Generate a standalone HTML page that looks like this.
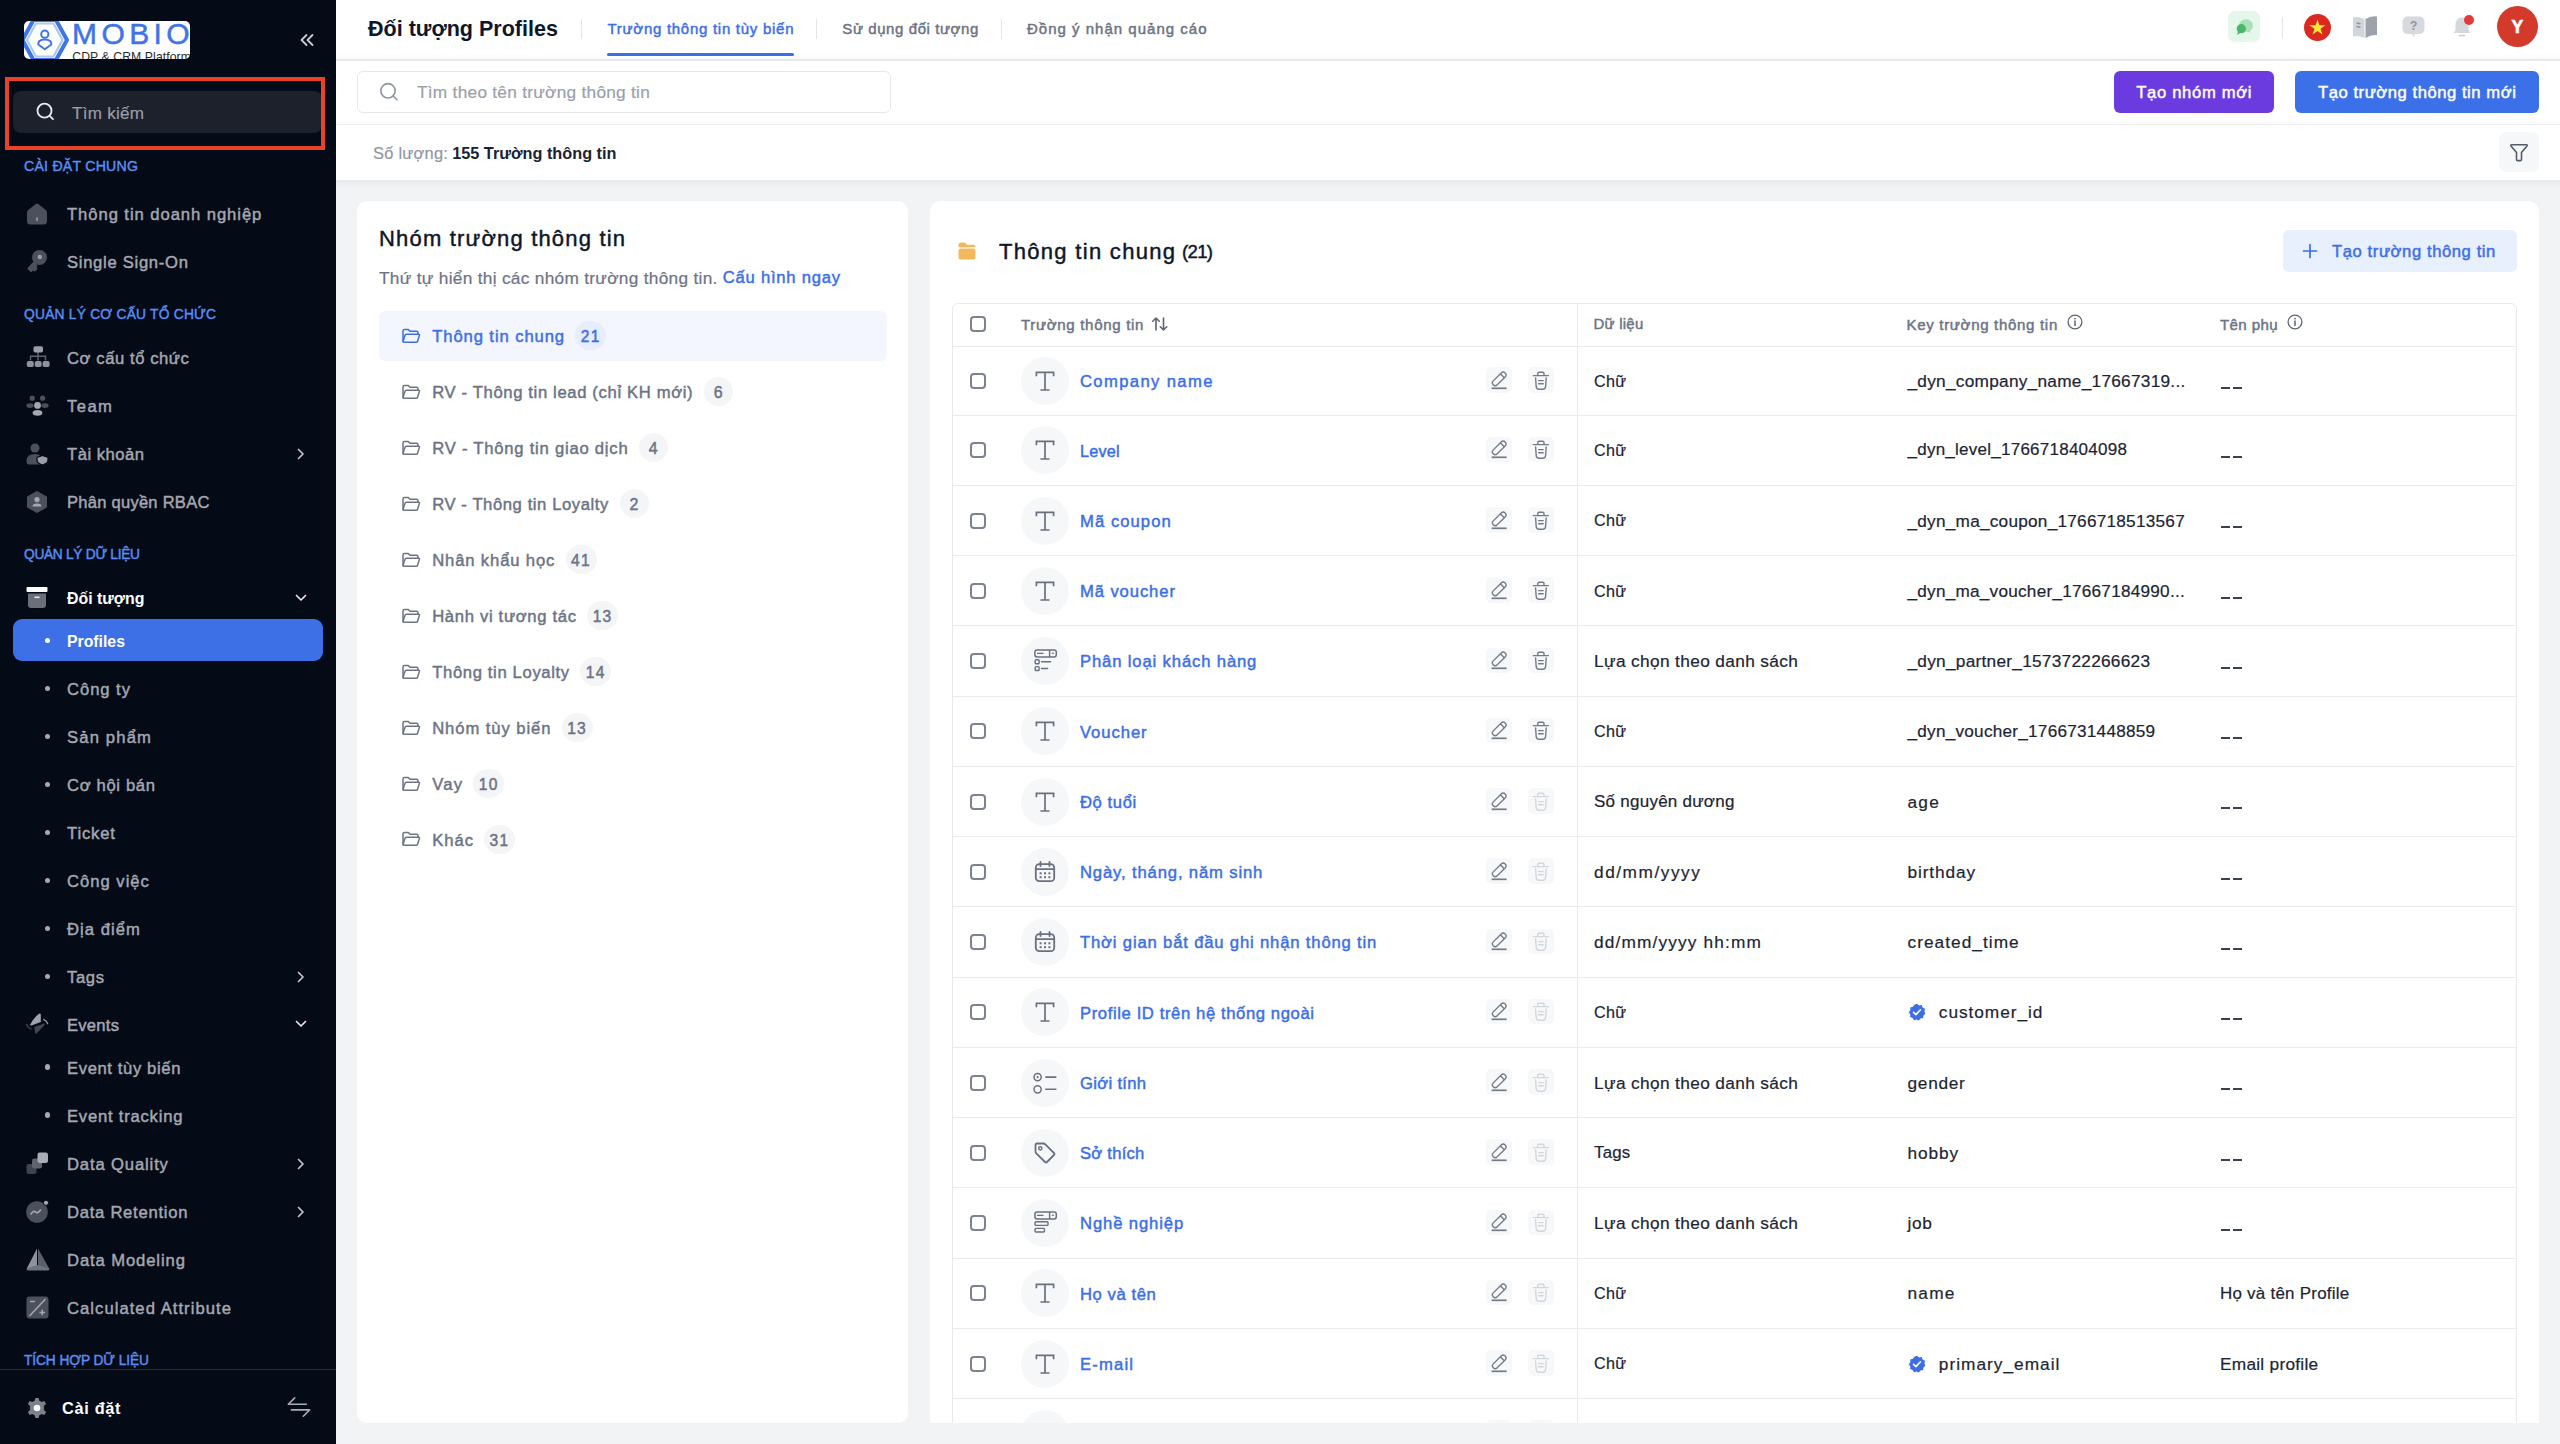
<!DOCTYPE html><html><head><meta charset="utf-8"><style>html,body{margin:0;padding:0;width:2560px;height:1444px;overflow:hidden;background:#f2f3f5;font-family:'Liberation Sans',sans-serif;position:relative}</style></head><body><div style="position:absolute;left:0;top:0;width:336px;height:1444px;background:#040a16"></div><div id="logo" style="position:absolute;left:24px;top:21px;width:166px;height:38px;background:#fff;border-radius:5px;overflow:hidden"><svg width="166" height="38" viewBox="0 0 166 38" style="position:absolute;left:0;top:0"><polygon points="-1.5,19 9.5,-1 32,-1 43,19 32,39 9.5,39" fill="none" stroke="#3f74e8" stroke-width="4"/><polygon points="3,19 12,2.5 29.5,2.5 38.5,19 29.5,35.5 12,35.5" fill="none" stroke="#a9c8f7" stroke-width="2.2"/><circle cx="20.8" cy="13.2" r="3.6" fill="none" stroke="#3f74e8" stroke-width="2"/><path d="M20.8,18.5 C15.5,18.5 14,21 14.3,23.5 L20.8,28.2 L27.3,23.5 C27.6,21 26.1,18.5 20.8,18.5 Z" fill="none" stroke="#3f74e8" stroke-width="2" stroke-linejoin="round"/></svg><div style="position:absolute;left:48px;top:-4.5px;font:400 30px/34px 'Liberation Sans',sans-serif;color:#3f74e8;letter-spacing:4.4px;white-space:nowrap;-webkit-text-stroke:0.5px #3f74e8">MOBIO</div><div style="position:absolute;left:48.3px;top:28.5px;font:400 12.2px/14px 'Liberation Sans',sans-serif;color:#2b2b2b;letter-spacing:0.1px;white-space:nowrap">CDP &amp; CRM Platform</div></div><svg style="position:absolute;left:299px;top:33px" width="16" height="14" viewBox="0 0 16 14"><path d="M7.5,2 L2.5,7 L7.5,12 M13.5,2 L8.5,7 L13.5,12" fill="none" stroke="#c9ccd3" stroke-width="1.8" stroke-linecap="round" stroke-linejoin="round"/></svg><div style="position:absolute;left:13px;top:91px;width:309px;height:42px;background:#1c212b;border-radius:8px"></div><svg style="position:absolute;left:35px;top:101px" width="21" height="21" viewBox="0 0 21 21"><circle cx="9.5" cy="9.7" r="7" fill="none" stroke="#e9eaee" stroke-width="1.8"/><path d="M14.6,14.8 L18,18.2" stroke="#e9eaee" stroke-width="1.8" stroke-linecap="round"/></svg><div style="position:absolute;left:5px;top:77px;width:312px;height:65px;border:4.6px solid #e8432a"></div><div style="position:absolute;left:13px;top:619px;width:310px;height:42px;background:#3d6fe6;border-radius:9px"></div><div style="position:absolute;left:44.8px;top:637.5px;width:5.5px;height:5.5px;border-radius:50%;background:#ffffff"></div><div style="position:absolute;left:44.8px;top:685.5px;width:5.5px;height:5.5px;border-radius:50%;background:#a4a8b1"></div><div style="position:absolute;left:44.8px;top:733.5px;width:5.5px;height:5.5px;border-radius:50%;background:#a4a8b1"></div><div style="position:absolute;left:44.8px;top:781.5px;width:5.5px;height:5.5px;border-radius:50%;background:#a4a8b1"></div><div style="position:absolute;left:44.8px;top:829.5px;width:5.5px;height:5.5px;border-radius:50%;background:#a4a8b1"></div><div style="position:absolute;left:44.8px;top:877.5px;width:5.5px;height:5.5px;border-radius:50%;background:#a4a8b1"></div><div style="position:absolute;left:44.8px;top:925.5px;width:5.5px;height:5.5px;border-radius:50%;background:#a4a8b1"></div><div style="position:absolute;left:44.8px;top:973.6px;width:5.5px;height:5.5px;border-radius:50%;background:#a4a8b1"></div><div style="position:absolute;left:44.8px;top:1064.4px;width:5.5px;height:5.5px;border-radius:50%;background:#a4a8b1"></div><div style="position:absolute;left:44.8px;top:1112.3px;width:5.5px;height:5.5px;border-radius:50%;background:#a4a8b1"></div><svg style="position:absolute;left:294px;top:446.5px" width="14" height="14" viewBox="0 0 14 14"><path d="M4.5,2.5 L9,7 L4.5,11.5" fill="none" stroke="#c2c5cc" stroke-width="1.7" stroke-linecap="round" stroke-linejoin="round"/></svg><svg style="position:absolute;left:294px;top:590.5px" width="14" height="14" viewBox="0 0 14 14"><path d="M2.5,4.5 L7,9 L11.5,4.5" fill="none" stroke="#e6e7ea" stroke-width="1.7" stroke-linecap="round" stroke-linejoin="round"/></svg><svg style="position:absolute;left:294px;top:969.6px" width="14" height="14" viewBox="0 0 14 14"><path d="M4.5,2.5 L9,7 L4.5,11.5" fill="none" stroke="#c2c5cc" stroke-width="1.7" stroke-linecap="round" stroke-linejoin="round"/></svg><svg style="position:absolute;left:294px;top:1017.3px" width="14" height="14" viewBox="0 0 14 14"><path d="M2.5,4.5 L7,9 L11.5,4.5" fill="none" stroke="#e6e7ea" stroke-width="1.7" stroke-linecap="round" stroke-linejoin="round"/></svg><svg style="position:absolute;left:294px;top:1156.5px" width="14" height="14" viewBox="0 0 14 14"><path d="M4.5,2.5 L9,7 L4.5,11.5" fill="none" stroke="#c2c5cc" stroke-width="1.7" stroke-linecap="round" stroke-linejoin="round"/></svg><svg style="position:absolute;left:294px;top:1204.6px" width="14" height="14" viewBox="0 0 14 14"><path d="M4.5,2.5 L9,7 L4.5,11.5" fill="none" stroke="#c2c5cc" stroke-width="1.7" stroke-linecap="round" stroke-linejoin="round"/></svg><div style="position:absolute;left:0;top:1369px;width:336px;height:75px;background:#040a16;border-top:1px solid #262b36"></div><svg style="position:absolute;left:287px;top:1396px" width="25" height="23" viewBox="0 0 25 23"><path d="M1.3,8.2 L19.4,8.2 M1.3,8.2 L7.7,1.9 M22.6,13.9 L4.4,13.9 M22.6,13.9 L16.3,20.2" fill="none" stroke="#a9adb6" stroke-width="1.6" stroke-linecap="round"/></svg><div style="position:absolute;left:336px;top:0;width:2224px;height:1444px;background:#f2f3f5"></div><div style="position:absolute;left:336px;top:0;width:2224px;height:180px;background:#ffffff"></div><div style="position:absolute;left:336px;top:53px;width:2224px;height:6px;background:linear-gradient(to bottom, rgba(0,0,0,0), rgba(0,0,0,0.025))"></div><div style="position:absolute;left:336px;top:59px;width:2224px;height:1.5px;background:#e6e7ea"></div><div style="position:absolute;left:336px;top:119px;width:2224px;height:4.5px;background:linear-gradient(to bottom, rgba(0,0,0,0), rgba(0,0,0,0.015))"></div><div style="position:absolute;left:336px;top:123.5px;width:2224px;height:1.5px;background:#eceef0"></div><div style="position:absolute;left:336px;top:180px;width:2224px;height:8px;background:linear-gradient(to bottom, #e8e9ec, #f2f3f5)"></div><div style="position:absolute;left:580.5px;top:19px;width:1px;height:20px;background:#e3e5e8"></div><div style="position:absolute;left:607px;top:53px;width:187px;height:3px;background:#3b6ee8;border-radius:2px"></div><div style="position:absolute;left:815.5px;top:19px;width:1px;height:20px;background:#e3e5e8"></div><div style="position:absolute;left:1000.5px;top:19px;width:1px;height:20px;background:#e3e5e8"></div><div style="position:absolute;left:2228px;top:11px;width:32px;height:31px;background:#e5f6ea;border-radius:7px"></div><svg style="position:absolute;left:2232px;top:15px" width="24" height="24" viewBox="0 0 24 24"><ellipse cx="14" cy="10.5" rx="7" ry="6.3" fill="#a9dfb9"/><path d="M17,15 L19,18 L14.5,16" fill="#a9dfb9"/><circle cx="9.3" cy="13.7" r="4.6" fill="#47b968"/><path d="M6,16.5 L5,20 L9,17.5" fill="#47b968"/></svg><div style="position:absolute;left:2282px;top:16.5px;width:1px;height:21px;background:#e3e5e8"></div><svg style="position:absolute;left:2304px;top:13.5px" width="27" height="27" viewBox="0 0 27 27"><circle cx="13.5" cy="13.5" r="13.5" fill="#da2a1f"/><polygon points="13.5,5.5 15.4,11.2 21.4,11.2 16.5,14.8 18.4,20.5 13.5,17 8.6,20.5 10.5,14.8 5.6,11.2 11.6,11.2" fill="#fde93a"/></svg><svg style="position:absolute;left:2352px;top:15px" width="26" height="24" viewBox="0 0 26 24"><path d="M1,2.5 Q6,1 12.5,4 L12.5,23 Q6,20 1,21.5 Z" fill="#d2d5db"/><path d="M13.5,4 Q19,0.5 25,1.5 L25,20 Q19,19.5 13.5,23 Z" fill="#9da2ab"/><path d="M4.5,8 L8.5,8.8 M4.5,11.5 L8.5,12.3" stroke="#8f949d" stroke-width="1.5"/></svg><svg style="position:absolute;left:2402px;top:16px" width="23" height="22" viewBox="0 0 23 22"><rect x="0.5" y="0.5" width="22" height="17.5" rx="5" fill="#d7d9de"/><path d="M9.5,17 L11.5,21 L13.5,17 Z" fill="#d7d9de"/><text x="11.5" y="14" font-family="Liberation Sans" font-weight="700" font-size="12.5" fill="#9095a0" text-anchor="middle">?</text></svg><svg style="position:absolute;left:2451px;top:13px" width="26" height="26" viewBox="0 0 26 26"><path d="M11,4.5 C6.5,4.5 4.5,8 4.5,12 L4.5,17 L2.5,20 L19.5,20 L17.5,17 L17.5,12 C17.5,8 15.5,4.5 11,4.5 Z" fill="#d5d8dd"/><path d="M8.5,22.5 L13.5,22.5" stroke="#c8cbd1" stroke-width="1.6" stroke-linecap="round"/><circle cx="18" cy="7" r="5" fill="#e5383b"/></svg><div style="position:absolute;left:2497px;top:6px;width:41px;height:41px;background:#d33a2c;border-radius:50%"></div><div style="position:absolute;left:357px;top:70.5px;width:532px;height:40px;border:1px solid #e6e8eb;border-radius:6px;background:#fff"></div><svg style="position:absolute;left:378px;top:81px" width="22" height="22" viewBox="0 0 22 22"><circle cx="10" cy="9.8" r="7.2" fill="none" stroke="#8e94a0" stroke-width="1.6"/><path d="M15.2,15 L19,18.8" stroke="#8e94a0" stroke-width="1.6" stroke-linecap="round"/></svg><div style="position:absolute;left:2114px;top:71px;width:160px;height:42px;background:#6c3bdf;border-radius:6px"></div><div style="position:absolute;left:2295px;top:71px;width:244px;height:42px;background:#3c70e9;border-radius:6px"></div><div style="position:absolute;left:2499px;top:132px;width:40px;height:40px;background:#f6f7f9;border-radius:7px"></div><svg style="position:absolute;left:2508px;top:141px" width="22" height="22" viewBox="0 0 22 22"><path d="M3.5,3.8 L18.5,3.8 Q19.6,3.8 19,4.9 L13.5,11.5 L13.5,18.2 Q13.5,19.6 12.2,19.6 L9.8,19.6 Q8.5,19.6 8.5,18.2 L8.5,11.5 L3,4.9 Q2.4,3.8 3.5,3.8 Z" fill="none" stroke="#555c69" stroke-width="1.6" stroke-linejoin="round"/></svg><div style="position:absolute;left:357px;top:201px;width:551px;height:1222px;background:#fff;border-radius:10px"></div><div style="position:absolute;left:379px;top:311px;width:508px;height:49.5px;background:#f3f6fe;border-radius:6px"></div><svg style="position:absolute;left:400.5px;top:325.5px" width="20" height="20" viewBox="0 0 20 20"><path d="M2,15.5 L2,5 Q2,3.5 3.5,3.5 L7.3,3.5 L9,5.3 L15.5,5.3 Q17,5.3 17,6.8 L17,8.2" fill="none" stroke="#3b6ee8" stroke-width="1.5" stroke-linejoin="round"/><path d="M2,15.5 L4,9.2 Q4.3,8.2 5.4,8.2 L17.5,8.2 Q18.8,8.2 18.4,9.4 L16.6,15.3 Q16.3,16.3 15.2,16.3 L3,16.3 Q2,16.3 2,15.5 Z" fill="none" stroke="#3b6ee8" stroke-width="1.5" stroke-linejoin="round"/></svg><div style="position:absolute;left:575.2px;top:321.0px;width:31px;height:29px;border-radius:15px;background:#e6edfc"></div><svg style="position:absolute;left:400.5px;top:381.6px" width="20" height="20" viewBox="0 0 20 20"><path d="M2,15.5 L2,5 Q2,3.5 3.5,3.5 L7.3,3.5 L9,5.3 L15.5,5.3 Q17,5.3 17,6.8 L17,8.2" fill="none" stroke="#6b7385" stroke-width="1.5" stroke-linejoin="round"/><path d="M2,15.5 L4,9.2 Q4.3,8.2 5.4,8.2 L17.5,8.2 Q18.8,8.2 18.4,9.4 L16.6,15.3 Q16.3,16.3 15.2,16.3 L3,16.3 Q2,16.3 2,15.5 Z" fill="none" stroke="#6b7385" stroke-width="1.5" stroke-linejoin="round"/></svg><div style="position:absolute;left:703.8px;top:377.1px;width:29px;height:29px;border-radius:15px;background:#f4f5f7"></div><svg style="position:absolute;left:400.5px;top:437.6px" width="20" height="20" viewBox="0 0 20 20"><path d="M2,15.5 L2,5 Q2,3.5 3.5,3.5 L7.3,3.5 L9,5.3 L15.5,5.3 Q17,5.3 17,6.8 L17,8.2" fill="none" stroke="#6b7385" stroke-width="1.5" stroke-linejoin="round"/><path d="M2,15.5 L4,9.2 Q4.3,8.2 5.4,8.2 L17.5,8.2 Q18.8,8.2 18.4,9.4 L16.6,15.3 Q16.3,16.3 15.2,16.3 L3,16.3 Q2,16.3 2,15.5 Z" fill="none" stroke="#6b7385" stroke-width="1.5" stroke-linejoin="round"/></svg><div style="position:absolute;left:638.8px;top:433.1px;width:29px;height:29px;border-radius:15px;background:#f4f5f7"></div><svg style="position:absolute;left:400.5px;top:493.6px" width="20" height="20" viewBox="0 0 20 20"><path d="M2,15.5 L2,5 Q2,3.5 3.5,3.5 L7.3,3.5 L9,5.3 L15.5,5.3 Q17,5.3 17,6.8 L17,8.2" fill="none" stroke="#6b7385" stroke-width="1.5" stroke-linejoin="round"/><path d="M2,15.5 L4,9.2 Q4.3,8.2 5.4,8.2 L17.5,8.2 Q18.8,8.2 18.4,9.4 L16.6,15.3 Q16.3,16.3 15.2,16.3 L3,16.3 Q2,16.3 2,15.5 Z" fill="none" stroke="#6b7385" stroke-width="1.5" stroke-linejoin="round"/></svg><div style="position:absolute;left:619.5px;top:489.1px;width:29px;height:29px;border-radius:15px;background:#f4f5f7"></div><svg style="position:absolute;left:400.5px;top:549.7px" width="20" height="20" viewBox="0 0 20 20"><path d="M2,15.5 L2,5 Q2,3.5 3.5,3.5 L7.3,3.5 L9,5.3 L15.5,5.3 Q17,5.3 17,6.8 L17,8.2" fill="none" stroke="#6b7385" stroke-width="1.5" stroke-linejoin="round"/><path d="M2,15.5 L4,9.2 Q4.3,8.2 5.4,8.2 L17.5,8.2 Q18.8,8.2 18.4,9.4 L16.6,15.3 Q16.3,16.3 15.2,16.3 L3,16.3 Q2,16.3 2,15.5 Z" fill="none" stroke="#6b7385" stroke-width="1.5" stroke-linejoin="round"/></svg><div style="position:absolute;left:565.5px;top:545.2px;width:31px;height:29px;border-radius:15px;background:#f4f5f7"></div><svg style="position:absolute;left:400.5px;top:605.9px" width="20" height="20" viewBox="0 0 20 20"><path d="M2,15.5 L2,5 Q2,3.5 3.5,3.5 L7.3,3.5 L9,5.3 L15.5,5.3 Q17,5.3 17,6.8 L17,8.2" fill="none" stroke="#6b7385" stroke-width="1.5" stroke-linejoin="round"/><path d="M2,15.5 L4,9.2 Q4.3,8.2 5.4,8.2 L17.5,8.2 Q18.8,8.2 18.4,9.4 L16.6,15.3 Q16.3,16.3 15.2,16.3 L3,16.3 Q2,16.3 2,15.5 Z" fill="none" stroke="#6b7385" stroke-width="1.5" stroke-linejoin="round"/></svg><div style="position:absolute;left:587.1px;top:601.4px;width:31px;height:29px;border-radius:15px;background:#f4f5f7"></div><svg style="position:absolute;left:400.5px;top:661.5px" width="20" height="20" viewBox="0 0 20 20"><path d="M2,15.5 L2,5 Q2,3.5 3.5,3.5 L7.3,3.5 L9,5.3 L15.5,5.3 Q17,5.3 17,6.8 L17,8.2" fill="none" stroke="#6b7385" stroke-width="1.5" stroke-linejoin="round"/><path d="M2,15.5 L4,9.2 Q4.3,8.2 5.4,8.2 L17.5,8.2 Q18.8,8.2 18.4,9.4 L16.6,15.3 Q16.3,16.3 15.2,16.3 L3,16.3 Q2,16.3 2,15.5 Z" fill="none" stroke="#6b7385" stroke-width="1.5" stroke-linejoin="round"/></svg><div style="position:absolute;left:580.3px;top:657.0px;width:31px;height:29px;border-radius:15px;background:#f4f5f7"></div><svg style="position:absolute;left:400.5px;top:717.5px" width="20" height="20" viewBox="0 0 20 20"><path d="M2,15.5 L2,5 Q2,3.5 3.5,3.5 L7.3,3.5 L9,5.3 L15.5,5.3 Q17,5.3 17,6.8 L17,8.2" fill="none" stroke="#6b7385" stroke-width="1.5" stroke-linejoin="round"/><path d="M2,15.5 L4,9.2 Q4.3,8.2 5.4,8.2 L17.5,8.2 Q18.8,8.2 18.4,9.4 L16.6,15.3 Q16.3,16.3 15.2,16.3 L3,16.3 Q2,16.3 2,15.5 Z" fill="none" stroke="#6b7385" stroke-width="1.5" stroke-linejoin="round"/></svg><div style="position:absolute;left:561.6px;top:713.0px;width:31px;height:29px;border-radius:15px;background:#f4f5f7"></div><svg style="position:absolute;left:400.5px;top:773.8px" width="20" height="20" viewBox="0 0 20 20"><path d="M2,15.5 L2,5 Q2,3.5 3.5,3.5 L7.3,3.5 L9,5.3 L15.5,5.3 Q17,5.3 17,6.8 L17,8.2" fill="none" stroke="#6b7385" stroke-width="1.5" stroke-linejoin="round"/><path d="M2,15.5 L4,9.2 Q4.3,8.2 5.4,8.2 L17.5,8.2 Q18.8,8.2 18.4,9.4 L16.6,15.3 Q16.3,16.3 15.2,16.3 L3,16.3 Q2,16.3 2,15.5 Z" fill="none" stroke="#6b7385" stroke-width="1.5" stroke-linejoin="round"/></svg><div style="position:absolute;left:473.2px;top:769.3px;width:31px;height:29px;border-radius:15px;background:#f4f5f7"></div><svg style="position:absolute;left:400.5px;top:829.4px" width="20" height="20" viewBox="0 0 20 20"><path d="M2,15.5 L2,5 Q2,3.5 3.5,3.5 L7.3,3.5 L9,5.3 L15.5,5.3 Q17,5.3 17,6.8 L17,8.2" fill="none" stroke="#6b7385" stroke-width="1.5" stroke-linejoin="round"/><path d="M2,15.5 L4,9.2 Q4.3,8.2 5.4,8.2 L17.5,8.2 Q18.8,8.2 18.4,9.4 L16.6,15.3 Q16.3,16.3 15.2,16.3 L3,16.3 Q2,16.3 2,15.5 Z" fill="none" stroke="#6b7385" stroke-width="1.5" stroke-linejoin="round"/></svg><div style="position:absolute;left:484.0px;top:824.9px;width:31px;height:29px;border-radius:15px;background:#f4f5f7"></div><div style="position:absolute;left:930px;top:201px;width:1609px;height:1222px;background:#fff;border-radius:10px 10px 0 0;overflow:hidden"></div><svg style="position:absolute;left:957px;top:241px" width="20" height="20" viewBox="0 0 20 20"><path d="M1.5,4 Q1.5,1.5 4,1.5 L7,1.5 Q8.5,1.5 9.5,3 L10,3.8 L16.5,3.8 Q18.5,3.8 18.5,5.5 L18.5,6.2 L1.5,6.2 Z" fill="#f3b85c"/><rect x="1.5" y="7.6" width="17" height="11" rx="2.6" fill="#f3b85c"/></svg><div style="position:absolute;left:2283px;top:230px;width:234px;height:42px;background:#e8effd;border-radius:6px"></div><svg style="position:absolute;left:2302px;top:243px" width="16" height="16" viewBox="0 0 16 16"><path d="M8,1.5 L8,14.5 M1.5,8 L14.5,8" stroke="#3b6ee8" stroke-width="1.7" stroke-linecap="round"/></svg><div style="position:absolute;left:951.5px;top:302.5px;width:1565.5px;height:1200px;border:1px solid #e7e9ec;border-radius:6px;box-sizing:border-box"></div><div style="position:absolute;left:1577px;top:302.5px;width:1px;height:1200px;background:#e7e9ec"></div><div style="position:absolute;left:970px;top:316.0px;width:16px;height:16px;border:2px solid #7c8290;border-radius:4px;box-sizing:border-box"></div><svg style="position:absolute;left:1151px;top:316px" width="18" height="16" viewBox="0 0 18 16"><path d="M5,14 L5,2 M1.8,5.2 L5,2 L8.2,5.2 M12.5,2 L12.5,14 M9.3,10.8 L12.5,14 L15.7,10.8" fill="none" stroke="#5d6370" stroke-width="1.6" stroke-linecap="round" stroke-linejoin="round"/></svg><svg style="position:absolute;left:2066.5px;top:314.0px" width="16" height="16" viewBox="0 0 16 16"><circle cx="8" cy="8" r="6.9" fill="none" stroke="#5d6370" stroke-width="1.3"/><path d="M8,7 L8,11.5" stroke="#5d6370" stroke-width="1.5" stroke-linecap="round"/><circle cx="8" cy="4.6" r="0.9" fill="#5d6370"/></svg><svg style="position:absolute;left:2286.5px;top:314.0px" width="16" height="16" viewBox="0 0 16 16"><circle cx="8" cy="8" r="6.9" fill="none" stroke="#5d6370" stroke-width="1.3"/><path d="M8,7 L8,11.5" stroke="#5d6370" stroke-width="1.5" stroke-linecap="round"/><circle cx="8" cy="4.6" r="0.9" fill="#5d6370"/></svg><div style="position:absolute;left:952.5px;top:346.00px;width:1563.5px;height:1px;background:#e9ebee"></div><div style="position:absolute;left:952.5px;top:414.60px;width:1563.5px;height:1px;background:#e9ebee"></div><div style="position:absolute;left:970px;top:372.8px;width:16px;height:16px;border:2px solid #7c8290;border-radius:4px;box-sizing:border-box"></div><div style="position:absolute;left:1021px;top:356.8px;width:48px;height:48px;border-radius:50%;background:#f6f7f9"></div><svg style="position:absolute;left:1033px;top:368.8px" width="24" height="24" viewBox="0 0 24 24"><path d="M3.4,6.3 L3.4,3.3 L20.6,3.3 L20.6,6.3 M12,3.3 L12,21 M8.3,21 L15.7,21" fill="none" stroke="#6a7080" stroke-width="1.7" stroke-linecap="square"/></svg><div style="position:absolute;left:1486px;top:367.4px;width:26px;height:25.5px;border-radius:5px;background:#f7f8f9"></div><div style="position:absolute;left:1528px;top:367.4px;width:26px;height:25.5px;border-radius:5px;background:#f7f8f9"></div><svg style="position:absolute;left:1489px;top:370.8px" width="20" height="20" viewBox="0 0 20 20"><g transform="rotate(-45 10.2 7.9)"><rect x="1.8" y="5.1" width="16.8" height="5.6" rx="2.8" fill="none" stroke="#747a88" stroke-width="1.35"/><path d="M14.6,5.1 L14.6,10.7" stroke="#747a88" stroke-width="1.35"/></g><path d="M2.6,17.3 L17.6,17.3" stroke="#747a88" stroke-width="1.7"/></svg><svg style="position:absolute;left:1531px;top:370.8px" width="20" height="20" viewBox="0 0 20 20"><path d="M2.3,4.6 L17.4,4.6 M6.8,4.3 L6.8,2.6 Q6.8,1.2 8.2,1.2 L11.6,1.2 Q13,1.2 13,2.6 L13,4.3 M4.6,7 L5.2,15.5 Q5.4,18.2 8,18.2 L11.8,18.2 Q14.4,18.2 14.6,15.5 L15.2,7 M7.6,9.6 L12.2,9.6 M7.6,12.8 L12.2,12.8" fill="none" stroke="#747a88" stroke-width="1.4" stroke-linecap="round" stroke-linejoin="round"/></svg><div style="position:absolute;left:2221px;top:387px;width:9px;height:2px;background:#3a4252"></div><div style="position:absolute;left:2233px;top:387px;width:9px;height:2px;background:#3a4252"></div><div style="position:absolute;left:952.5px;top:484.85px;width:1563.5px;height:1px;background:#e9ebee"></div><div style="position:absolute;left:970px;top:442.2px;width:16px;height:16px;border:2px solid #7c8290;border-radius:4px;box-sizing:border-box"></div><div style="position:absolute;left:1021px;top:426.2px;width:48px;height:48px;border-radius:50%;background:#f6f7f9"></div><svg style="position:absolute;left:1033px;top:438.2px" width="24" height="24" viewBox="0 0 24 24"><path d="M3.4,6.3 L3.4,3.3 L20.6,3.3 L20.6,6.3 M12,3.3 L12,21 M8.3,21 L15.7,21" fill="none" stroke="#6a7080" stroke-width="1.7" stroke-linecap="square"/></svg><div style="position:absolute;left:1486px;top:436.8px;width:26px;height:25.5px;border-radius:5px;background:#f7f8f9"></div><div style="position:absolute;left:1528px;top:436.8px;width:26px;height:25.5px;border-radius:5px;background:#f7f8f9"></div><svg style="position:absolute;left:1489px;top:440.2px" width="20" height="20" viewBox="0 0 20 20"><g transform="rotate(-45 10.2 7.9)"><rect x="1.8" y="5.1" width="16.8" height="5.6" rx="2.8" fill="none" stroke="#747a88" stroke-width="1.35"/><path d="M14.6,5.1 L14.6,10.7" stroke="#747a88" stroke-width="1.35"/></g><path d="M2.6,17.3 L17.6,17.3" stroke="#747a88" stroke-width="1.7"/></svg><svg style="position:absolute;left:1531px;top:440.2px" width="20" height="20" viewBox="0 0 20 20"><path d="M2.3,4.6 L17.4,4.6 M6.8,4.3 L6.8,2.6 Q6.8,1.2 8.2,1.2 L11.6,1.2 Q13,1.2 13,2.6 L13,4.3 M4.6,7 L5.2,15.5 Q5.4,18.2 8,18.2 L11.8,18.2 Q14.4,18.2 14.6,15.5 L15.2,7 M7.6,9.6 L12.2,9.6 M7.6,12.8 L12.2,12.8" fill="none" stroke="#747a88" stroke-width="1.4" stroke-linecap="round" stroke-linejoin="round"/></svg><div style="position:absolute;left:2221px;top:456px;width:9px;height:2px;background:#3a4252"></div><div style="position:absolute;left:2233px;top:456px;width:9px;height:2px;background:#3a4252"></div><div style="position:absolute;left:952.5px;top:555.10px;width:1563.5px;height:1px;background:#e9ebee"></div><div style="position:absolute;left:970px;top:512.5px;width:16px;height:16px;border:2px solid #7c8290;border-radius:4px;box-sizing:border-box"></div><div style="position:absolute;left:1021px;top:496.5px;width:48px;height:48px;border-radius:50%;background:#f6f7f9"></div><svg style="position:absolute;left:1033px;top:508.5px" width="24" height="24" viewBox="0 0 24 24"><path d="M3.4,6.3 L3.4,3.3 L20.6,3.3 L20.6,6.3 M12,3.3 L12,21 M8.3,21 L15.7,21" fill="none" stroke="#6a7080" stroke-width="1.7" stroke-linecap="square"/></svg><div style="position:absolute;left:1486px;top:507.1px;width:26px;height:25.5px;border-radius:5px;background:#f7f8f9"></div><div style="position:absolute;left:1528px;top:507.1px;width:26px;height:25.5px;border-radius:5px;background:#f7f8f9"></div><svg style="position:absolute;left:1489px;top:510.5px" width="20" height="20" viewBox="0 0 20 20"><g transform="rotate(-45 10.2 7.9)"><rect x="1.8" y="5.1" width="16.8" height="5.6" rx="2.8" fill="none" stroke="#747a88" stroke-width="1.35"/><path d="M14.6,5.1 L14.6,10.7" stroke="#747a88" stroke-width="1.35"/></g><path d="M2.6,17.3 L17.6,17.3" stroke="#747a88" stroke-width="1.7"/></svg><svg style="position:absolute;left:1531px;top:510.5px" width="20" height="20" viewBox="0 0 20 20"><path d="M2.3,4.6 L17.4,4.6 M6.8,4.3 L6.8,2.6 Q6.8,1.2 8.2,1.2 L11.6,1.2 Q13,1.2 13,2.6 L13,4.3 M4.6,7 L5.2,15.5 Q5.4,18.2 8,18.2 L11.8,18.2 Q14.4,18.2 14.6,15.5 L15.2,7 M7.6,9.6 L12.2,9.6 M7.6,12.8 L12.2,12.8" fill="none" stroke="#747a88" stroke-width="1.4" stroke-linecap="round" stroke-linejoin="round"/></svg><div style="position:absolute;left:2221px;top:526px;width:9px;height:2px;background:#3a4252"></div><div style="position:absolute;left:2233px;top:526px;width:9px;height:2px;background:#3a4252"></div><div style="position:absolute;left:952.5px;top:625.35px;width:1563.5px;height:1px;background:#e9ebee"></div><div style="position:absolute;left:970px;top:582.7px;width:16px;height:16px;border:2px solid #7c8290;border-radius:4px;box-sizing:border-box"></div><div style="position:absolute;left:1021px;top:566.7px;width:48px;height:48px;border-radius:50%;background:#f6f7f9"></div><svg style="position:absolute;left:1033px;top:578.7px" width="24" height="24" viewBox="0 0 24 24"><path d="M3.4,6.3 L3.4,3.3 L20.6,3.3 L20.6,6.3 M12,3.3 L12,21 M8.3,21 L15.7,21" fill="none" stroke="#6a7080" stroke-width="1.7" stroke-linecap="square"/></svg><div style="position:absolute;left:1486px;top:577.3px;width:26px;height:25.5px;border-radius:5px;background:#f7f8f9"></div><div style="position:absolute;left:1528px;top:577.3px;width:26px;height:25.5px;border-radius:5px;background:#f7f8f9"></div><svg style="position:absolute;left:1489px;top:580.7px" width="20" height="20" viewBox="0 0 20 20"><g transform="rotate(-45 10.2 7.9)"><rect x="1.8" y="5.1" width="16.8" height="5.6" rx="2.8" fill="none" stroke="#747a88" stroke-width="1.35"/><path d="M14.6,5.1 L14.6,10.7" stroke="#747a88" stroke-width="1.35"/></g><path d="M2.6,17.3 L17.6,17.3" stroke="#747a88" stroke-width="1.7"/></svg><svg style="position:absolute;left:1531px;top:580.7px" width="20" height="20" viewBox="0 0 20 20"><path d="M2.3,4.6 L17.4,4.6 M6.8,4.3 L6.8,2.6 Q6.8,1.2 8.2,1.2 L11.6,1.2 Q13,1.2 13,2.6 L13,4.3 M4.6,7 L5.2,15.5 Q5.4,18.2 8,18.2 L11.8,18.2 Q14.4,18.2 14.6,15.5 L15.2,7 M7.6,9.6 L12.2,9.6 M7.6,12.8 L12.2,12.8" fill="none" stroke="#747a88" stroke-width="1.4" stroke-linecap="round" stroke-linejoin="round"/></svg><div style="position:absolute;left:2221px;top:597px;width:9px;height:2px;background:#3a4252"></div><div style="position:absolute;left:2233px;top:597px;width:9px;height:2px;background:#3a4252"></div><div style="position:absolute;left:952.5px;top:695.60px;width:1563.5px;height:1px;background:#e9ebee"></div><div style="position:absolute;left:970px;top:653.0px;width:16px;height:16px;border:2px solid #7c8290;border-radius:4px;box-sizing:border-box"></div><div style="position:absolute;left:1021px;top:637.0px;width:48px;height:48px;border-radius:50%;background:#f6f7f9"></div><svg style="position:absolute;left:1033.5px;top:649.0px" width="24" height="24" viewBox="0 0 24 24"><rect x="0.9" y="0.9" width="21.4" height="7" rx="2.2" fill="none" stroke="#6a7080" stroke-width="1.5"/><path d="M3,4.4 L9.5,4.4 M15.6,0.9 L15.6,7.9" stroke="#6a7080" stroke-width="1.4"/><path d="M17.8,5 L18.9,3.6 L20,5" fill="none" stroke="#6a7080" stroke-width="1"/><rect x="1.2" y="10.8" width="3.9" height="3.9" rx="0.8" fill="none" stroke="#6a7080" stroke-width="1.4"/><path d="M7.6,12.7 L16.6,12.7" stroke="#6a7080" stroke-width="1.5" stroke-linecap="round"/><rect x="1.2" y="17.6" width="3.9" height="3.9" rx="0.8" fill="none" stroke="#6a7080" stroke-width="1.4"/><path d="M7.6,19.6 L13.6,19.6" stroke="#6a7080" stroke-width="1.5" stroke-linecap="round"/></svg><div style="position:absolute;left:1486px;top:647.6px;width:26px;height:25.5px;border-radius:5px;background:#f7f8f9"></div><div style="position:absolute;left:1528px;top:647.6px;width:26px;height:25.5px;border-radius:5px;background:#f7f8f9"></div><svg style="position:absolute;left:1489px;top:651.0px" width="20" height="20" viewBox="0 0 20 20"><g transform="rotate(-45 10.2 7.9)"><rect x="1.8" y="5.1" width="16.8" height="5.6" rx="2.8" fill="none" stroke="#747a88" stroke-width="1.35"/><path d="M14.6,5.1 L14.6,10.7" stroke="#747a88" stroke-width="1.35"/></g><path d="M2.6,17.3 L17.6,17.3" stroke="#747a88" stroke-width="1.7"/></svg><svg style="position:absolute;left:1531px;top:651.0px" width="20" height="20" viewBox="0 0 20 20"><path d="M2.3,4.6 L17.4,4.6 M6.8,4.3 L6.8,2.6 Q6.8,1.2 8.2,1.2 L11.6,1.2 Q13,1.2 13,2.6 L13,4.3 M4.6,7 L5.2,15.5 Q5.4,18.2 8,18.2 L11.8,18.2 Q14.4,18.2 14.6,15.5 L15.2,7 M7.6,9.6 L12.2,9.6 M7.6,12.8 L12.2,12.8" fill="none" stroke="#747a88" stroke-width="1.4" stroke-linecap="round" stroke-linejoin="round"/></svg><div style="position:absolute;left:2221px;top:667px;width:9px;height:2px;background:#3a4252"></div><div style="position:absolute;left:2233px;top:667px;width:9px;height:2px;background:#3a4252"></div><div style="position:absolute;left:952.5px;top:765.85px;width:1563.5px;height:1px;background:#e9ebee"></div><div style="position:absolute;left:970px;top:723.2px;width:16px;height:16px;border:2px solid #7c8290;border-radius:4px;box-sizing:border-box"></div><div style="position:absolute;left:1021px;top:707.2px;width:48px;height:48px;border-radius:50%;background:#f6f7f9"></div><svg style="position:absolute;left:1033px;top:719.2px" width="24" height="24" viewBox="0 0 24 24"><path d="M3.4,6.3 L3.4,3.3 L20.6,3.3 L20.6,6.3 M12,3.3 L12,21 M8.3,21 L15.7,21" fill="none" stroke="#6a7080" stroke-width="1.7" stroke-linecap="square"/></svg><div style="position:absolute;left:1486px;top:717.8px;width:26px;height:25.5px;border-radius:5px;background:#f7f8f9"></div><div style="position:absolute;left:1528px;top:717.8px;width:26px;height:25.5px;border-radius:5px;background:#f7f8f9"></div><svg style="position:absolute;left:1489px;top:721.2px" width="20" height="20" viewBox="0 0 20 20"><g transform="rotate(-45 10.2 7.9)"><rect x="1.8" y="5.1" width="16.8" height="5.6" rx="2.8" fill="none" stroke="#747a88" stroke-width="1.35"/><path d="M14.6,5.1 L14.6,10.7" stroke="#747a88" stroke-width="1.35"/></g><path d="M2.6,17.3 L17.6,17.3" stroke="#747a88" stroke-width="1.7"/></svg><svg style="position:absolute;left:1531px;top:721.2px" width="20" height="20" viewBox="0 0 20 20"><path d="M2.3,4.6 L17.4,4.6 M6.8,4.3 L6.8,2.6 Q6.8,1.2 8.2,1.2 L11.6,1.2 Q13,1.2 13,2.6 L13,4.3 M4.6,7 L5.2,15.5 Q5.4,18.2 8,18.2 L11.8,18.2 Q14.4,18.2 14.6,15.5 L15.2,7 M7.6,9.6 L12.2,9.6 M7.6,12.8 L12.2,12.8" fill="none" stroke="#747a88" stroke-width="1.4" stroke-linecap="round" stroke-linejoin="round"/></svg><div style="position:absolute;left:2221px;top:737px;width:9px;height:2px;background:#3a4252"></div><div style="position:absolute;left:2233px;top:737px;width:9px;height:2px;background:#3a4252"></div><div style="position:absolute;left:952.5px;top:836.10px;width:1563.5px;height:1px;background:#e9ebee"></div><div style="position:absolute;left:970px;top:793.5px;width:16px;height:16px;border:2px solid #7c8290;border-radius:4px;box-sizing:border-box"></div><div style="position:absolute;left:1021px;top:777.5px;width:48px;height:48px;border-radius:50%;background:#f6f7f9"></div><svg style="position:absolute;left:1033px;top:789.5px" width="24" height="24" viewBox="0 0 24 24"><path d="M3.4,6.3 L3.4,3.3 L20.6,3.3 L20.6,6.3 M12,3.3 L12,21 M8.3,21 L15.7,21" fill="none" stroke="#6a7080" stroke-width="1.7" stroke-linecap="square"/></svg><div style="position:absolute;left:1486px;top:788.1px;width:26px;height:25.5px;border-radius:5px;background:#f7f8f9"></div><div style="position:absolute;left:1528px;top:788.1px;width:26px;height:25.5px;border-radius:5px;background:#f7f8f9"></div><svg style="position:absolute;left:1489px;top:791.5px" width="20" height="20" viewBox="0 0 20 20"><g transform="rotate(-45 10.2 7.9)"><rect x="1.8" y="5.1" width="16.8" height="5.6" rx="2.8" fill="none" stroke="#747a88" stroke-width="1.35"/><path d="M14.6,5.1 L14.6,10.7" stroke="#747a88" stroke-width="1.35"/></g><path d="M2.6,17.3 L17.6,17.3" stroke="#747a88" stroke-width="1.7"/></svg><svg style="position:absolute;left:1531px;top:791.5px" width="20" height="20" viewBox="0 0 20 20"><path d="M2.3,4.6 L17.4,4.6 M6.8,4.3 L6.8,2.6 Q6.8,1.2 8.2,1.2 L11.6,1.2 Q13,1.2 13,2.6 L13,4.3 M4.6,7 L5.2,15.5 Q5.4,18.2 8,18.2 L11.8,18.2 Q14.4,18.2 14.6,15.5 L15.2,7 M7.6,9.6 L12.2,9.6 M7.6,12.8 L12.2,12.8" fill="none" stroke="#d3d6db" stroke-width="1.4" stroke-linecap="round" stroke-linejoin="round"/></svg><div style="position:absolute;left:2221px;top:807px;width:9px;height:2px;background:#3a4252"></div><div style="position:absolute;left:2233px;top:807px;width:9px;height:2px;background:#3a4252"></div><div style="position:absolute;left:952.5px;top:906.35px;width:1563.5px;height:1px;background:#e9ebee"></div><div style="position:absolute;left:970px;top:863.7px;width:16px;height:16px;border:2px solid #7c8290;border-radius:4px;box-sizing:border-box"></div><div style="position:absolute;left:1021px;top:847.7px;width:48px;height:48px;border-radius:50%;background:#f6f7f9"></div><svg style="position:absolute;left:1033px;top:859.7px" width="24" height="24" viewBox="0 0 24 24"><rect x="2.8" y="4.2" width="18.4" height="17" rx="3.5" fill="none" stroke="#6a7080" stroke-width="1.8"/><path d="M2.8,9.2 L21.2,9.2 M7.5,2 L7.5,6 M16.5,2 L16.5,6" stroke="#6a7080" stroke-width="1.8" stroke-linecap="round"/><g fill="#6a7080"><rect x="6.6" y="12.3" width="2" height="2"/><rect x="11" y="12.3" width="2" height="2"/><rect x="15.4" y="12.3" width="2" height="2"/><rect x="6.6" y="16.2" width="2" height="2"/><rect x="11" y="16.2" width="2" height="2"/><rect x="15.4" y="16.2" width="2" height="2"/></g></svg><div style="position:absolute;left:1486px;top:858.3px;width:26px;height:25.5px;border-radius:5px;background:#f7f8f9"></div><div style="position:absolute;left:1528px;top:858.3px;width:26px;height:25.5px;border-radius:5px;background:#f7f8f9"></div><svg style="position:absolute;left:1489px;top:861.7px" width="20" height="20" viewBox="0 0 20 20"><g transform="rotate(-45 10.2 7.9)"><rect x="1.8" y="5.1" width="16.8" height="5.6" rx="2.8" fill="none" stroke="#747a88" stroke-width="1.35"/><path d="M14.6,5.1 L14.6,10.7" stroke="#747a88" stroke-width="1.35"/></g><path d="M2.6,17.3 L17.6,17.3" stroke="#747a88" stroke-width="1.7"/></svg><svg style="position:absolute;left:1531px;top:861.7px" width="20" height="20" viewBox="0 0 20 20"><path d="M2.3,4.6 L17.4,4.6 M6.8,4.3 L6.8,2.6 Q6.8,1.2 8.2,1.2 L11.6,1.2 Q13,1.2 13,2.6 L13,4.3 M4.6,7 L5.2,15.5 Q5.4,18.2 8,18.2 L11.8,18.2 Q14.4,18.2 14.6,15.5 L15.2,7 M7.6,9.6 L12.2,9.6 M7.6,12.8 L12.2,12.8" fill="none" stroke="#d3d6db" stroke-width="1.4" stroke-linecap="round" stroke-linejoin="round"/></svg><div style="position:absolute;left:2221px;top:878px;width:9px;height:2px;background:#3a4252"></div><div style="position:absolute;left:2233px;top:878px;width:9px;height:2px;background:#3a4252"></div><div style="position:absolute;left:952.5px;top:976.60px;width:1563.5px;height:1px;background:#e9ebee"></div><div style="position:absolute;left:970px;top:934.0px;width:16px;height:16px;border:2px solid #7c8290;border-radius:4px;box-sizing:border-box"></div><div style="position:absolute;left:1021px;top:918.0px;width:48px;height:48px;border-radius:50%;background:#f6f7f9"></div><svg style="position:absolute;left:1033px;top:930.0px" width="24" height="24" viewBox="0 0 24 24"><rect x="2.8" y="4.2" width="18.4" height="17" rx="3.5" fill="none" stroke="#6a7080" stroke-width="1.8"/><path d="M2.8,9.2 L21.2,9.2 M7.5,2 L7.5,6 M16.5,2 L16.5,6" stroke="#6a7080" stroke-width="1.8" stroke-linecap="round"/><g fill="#6a7080"><rect x="6.6" y="12.3" width="2" height="2"/><rect x="11" y="12.3" width="2" height="2"/><rect x="15.4" y="12.3" width="2" height="2"/><rect x="6.6" y="16.2" width="2" height="2"/><rect x="11" y="16.2" width="2" height="2"/><rect x="15.4" y="16.2" width="2" height="2"/></g></svg><div style="position:absolute;left:1486px;top:928.6px;width:26px;height:25.5px;border-radius:5px;background:#f7f8f9"></div><div style="position:absolute;left:1528px;top:928.6px;width:26px;height:25.5px;border-radius:5px;background:#f7f8f9"></div><svg style="position:absolute;left:1489px;top:932.0px" width="20" height="20" viewBox="0 0 20 20"><g transform="rotate(-45 10.2 7.9)"><rect x="1.8" y="5.1" width="16.8" height="5.6" rx="2.8" fill="none" stroke="#747a88" stroke-width="1.35"/><path d="M14.6,5.1 L14.6,10.7" stroke="#747a88" stroke-width="1.35"/></g><path d="M2.6,17.3 L17.6,17.3" stroke="#747a88" stroke-width="1.7"/></svg><svg style="position:absolute;left:1531px;top:932.0px" width="20" height="20" viewBox="0 0 20 20"><path d="M2.3,4.6 L17.4,4.6 M6.8,4.3 L6.8,2.6 Q6.8,1.2 8.2,1.2 L11.6,1.2 Q13,1.2 13,2.6 L13,4.3 M4.6,7 L5.2,15.5 Q5.4,18.2 8,18.2 L11.8,18.2 Q14.4,18.2 14.6,15.5 L15.2,7 M7.6,9.6 L12.2,9.6 M7.6,12.8 L12.2,12.8" fill="none" stroke="#d3d6db" stroke-width="1.4" stroke-linecap="round" stroke-linejoin="round"/></svg><div style="position:absolute;left:2221px;top:948px;width:9px;height:2px;background:#3a4252"></div><div style="position:absolute;left:2233px;top:948px;width:9px;height:2px;background:#3a4252"></div><div style="position:absolute;left:952.5px;top:1046.85px;width:1563.5px;height:1px;background:#e9ebee"></div><div style="position:absolute;left:970px;top:1004.2px;width:16px;height:16px;border:2px solid #7c8290;border-radius:4px;box-sizing:border-box"></div><div style="position:absolute;left:1021px;top:988.2px;width:48px;height:48px;border-radius:50%;background:#f6f7f9"></div><svg style="position:absolute;left:1033px;top:1000.2px" width="24" height="24" viewBox="0 0 24 24"><path d="M3.4,6.3 L3.4,3.3 L20.6,3.3 L20.6,6.3 M12,3.3 L12,21 M8.3,21 L15.7,21" fill="none" stroke="#6a7080" stroke-width="1.7" stroke-linecap="square"/></svg><div style="position:absolute;left:1486px;top:998.8px;width:26px;height:25.5px;border-radius:5px;background:#f7f8f9"></div><div style="position:absolute;left:1528px;top:998.8px;width:26px;height:25.5px;border-radius:5px;background:#f7f8f9"></div><svg style="position:absolute;left:1489px;top:1002.2px" width="20" height="20" viewBox="0 0 20 20"><g transform="rotate(-45 10.2 7.9)"><rect x="1.8" y="5.1" width="16.8" height="5.6" rx="2.8" fill="none" stroke="#747a88" stroke-width="1.35"/><path d="M14.6,5.1 L14.6,10.7" stroke="#747a88" stroke-width="1.35"/></g><path d="M2.6,17.3 L17.6,17.3" stroke="#747a88" stroke-width="1.7"/></svg><svg style="position:absolute;left:1531px;top:1002.2px" width="20" height="20" viewBox="0 0 20 20"><path d="M2.3,4.6 L17.4,4.6 M6.8,4.3 L6.8,2.6 Q6.8,1.2 8.2,1.2 L11.6,1.2 Q13,1.2 13,2.6 L13,4.3 M4.6,7 L5.2,15.5 Q5.4,18.2 8,18.2 L11.8,18.2 Q14.4,18.2 14.6,15.5 L15.2,7 M7.6,9.6 L12.2,9.6 M7.6,12.8 L12.2,12.8" fill="none" stroke="#d3d6db" stroke-width="1.4" stroke-linecap="round" stroke-linejoin="round"/></svg><svg style="position:absolute;left:1908.2px;top:1003.2px" width="18" height="18" viewBox="0 0 18 18"><path d="M9,0.8 L11.1,2.4 L13.7,2.1 L14.6,4.6 L17,5.8 L16.4,8.4 L17.4,10.8 L15.4,12.5 L15.1,15.1 L12.5,15.4 L10.8,17.4 L8.4,16.4 L6,17.2 L4.6,14.9 L2.1,14.1 L2.3,11.5 L0.8,9.3 L2.4,7.2 L2.3,4.6 L4.8,3.8 L6.4,1.7 Z" fill="#3b6ee8"/><path d="M5.5,9.3 L7.9,11.6 L12.5,6.8" fill="none" stroke="#fff" stroke-width="1.6" stroke-linecap="round" stroke-linejoin="round"/></svg><div style="position:absolute;left:2221px;top:1018px;width:9px;height:2px;background:#3a4252"></div><div style="position:absolute;left:2233px;top:1018px;width:9px;height:2px;background:#3a4252"></div><div style="position:absolute;left:952.5px;top:1117.10px;width:1563.5px;height:1px;background:#e9ebee"></div><div style="position:absolute;left:970px;top:1074.5px;width:16px;height:16px;border:2px solid #7c8290;border-radius:4px;box-sizing:border-box"></div><div style="position:absolute;left:1021px;top:1058.5px;width:48px;height:48px;border-radius:50%;background:#f6f7f9"></div><svg style="position:absolute;left:1033px;top:1070.5px" width="24" height="24" viewBox="0 0 24 24"><circle cx="4.6" cy="6.1" r="3.6" fill="none" stroke="#6a7080" stroke-width="1.5"/><circle cx="4.6" cy="6.1" r="1.1" fill="#6a7080"/><circle cx="4.6" cy="18.3" r="3.6" fill="none" stroke="#6a7080" stroke-width="1.5"/><path d="M12.3,6.1 L23.4,6.1 M12.3,18.3 L23.4,18.3" stroke="#6a7080" stroke-width="1.6"/></svg><div style="position:absolute;left:1486px;top:1069.1px;width:26px;height:25.5px;border-radius:5px;background:#f7f8f9"></div><div style="position:absolute;left:1528px;top:1069.1px;width:26px;height:25.5px;border-radius:5px;background:#f7f8f9"></div><svg style="position:absolute;left:1489px;top:1072.5px" width="20" height="20" viewBox="0 0 20 20"><g transform="rotate(-45 10.2 7.9)"><rect x="1.8" y="5.1" width="16.8" height="5.6" rx="2.8" fill="none" stroke="#747a88" stroke-width="1.35"/><path d="M14.6,5.1 L14.6,10.7" stroke="#747a88" stroke-width="1.35"/></g><path d="M2.6,17.3 L17.6,17.3" stroke="#747a88" stroke-width="1.7"/></svg><svg style="position:absolute;left:1531px;top:1072.5px" width="20" height="20" viewBox="0 0 20 20"><path d="M2.3,4.6 L17.4,4.6 M6.8,4.3 L6.8,2.6 Q6.8,1.2 8.2,1.2 L11.6,1.2 Q13,1.2 13,2.6 L13,4.3 M4.6,7 L5.2,15.5 Q5.4,18.2 8,18.2 L11.8,18.2 Q14.4,18.2 14.6,15.5 L15.2,7 M7.6,9.6 L12.2,9.6 M7.6,12.8 L12.2,12.8" fill="none" stroke="#d3d6db" stroke-width="1.4" stroke-linecap="round" stroke-linejoin="round"/></svg><div style="position:absolute;left:2221px;top:1088px;width:9px;height:2px;background:#3a4252"></div><div style="position:absolute;left:2233px;top:1088px;width:9px;height:2px;background:#3a4252"></div><div style="position:absolute;left:952.5px;top:1187.35px;width:1563.5px;height:1px;background:#e9ebee"></div><div style="position:absolute;left:970px;top:1144.7px;width:16px;height:16px;border:2px solid #7c8290;border-radius:4px;box-sizing:border-box"></div><div style="position:absolute;left:1021px;top:1128.7px;width:48px;height:48px;border-radius:50%;background:#f6f7f9"></div><svg style="position:absolute;left:1033px;top:1140.7px" width="24" height="24" viewBox="0 0 24 24"><path d="M2.5,4 Q2.5,2.5 4,2.5 L10.5,2.5 Q11.5,2.5 12.3,3.3 L21,12 Q22,13 21,14 L14,21 Q13,22 12,21 L3.3,12.3 Q2.5,11.5 2.5,10.5 Z" fill="none" stroke="#6a7080" stroke-width="1.8" stroke-linejoin="round"/><circle cx="7.3" cy="7.3" r="1.6" fill="none" stroke="#6a7080" stroke-width="1.5"/></svg><div style="position:absolute;left:1486px;top:1139.3px;width:26px;height:25.5px;border-radius:5px;background:#f7f8f9"></div><div style="position:absolute;left:1528px;top:1139.3px;width:26px;height:25.5px;border-radius:5px;background:#f7f8f9"></div><svg style="position:absolute;left:1489px;top:1142.7px" width="20" height="20" viewBox="0 0 20 20"><g transform="rotate(-45 10.2 7.9)"><rect x="1.8" y="5.1" width="16.8" height="5.6" rx="2.8" fill="none" stroke="#747a88" stroke-width="1.35"/><path d="M14.6,5.1 L14.6,10.7" stroke="#747a88" stroke-width="1.35"/></g><path d="M2.6,17.3 L17.6,17.3" stroke="#747a88" stroke-width="1.7"/></svg><svg style="position:absolute;left:1531px;top:1142.7px" width="20" height="20" viewBox="0 0 20 20"><path d="M2.3,4.6 L17.4,4.6 M6.8,4.3 L6.8,2.6 Q6.8,1.2 8.2,1.2 L11.6,1.2 Q13,1.2 13,2.6 L13,4.3 M4.6,7 L5.2,15.5 Q5.4,18.2 8,18.2 L11.8,18.2 Q14.4,18.2 14.6,15.5 L15.2,7 M7.6,9.6 L12.2,9.6 M7.6,12.8 L12.2,12.8" fill="none" stroke="#d3d6db" stroke-width="1.4" stroke-linecap="round" stroke-linejoin="round"/></svg><div style="position:absolute;left:2221px;top:1159px;width:9px;height:2px;background:#3a4252"></div><div style="position:absolute;left:2233px;top:1159px;width:9px;height:2px;background:#3a4252"></div><div style="position:absolute;left:952.5px;top:1257.60px;width:1563.5px;height:1px;background:#e9ebee"></div><div style="position:absolute;left:970px;top:1215.0px;width:16px;height:16px;border:2px solid #7c8290;border-radius:4px;box-sizing:border-box"></div><div style="position:absolute;left:1021px;top:1199.0px;width:48px;height:48px;border-radius:50%;background:#f6f7f9"></div><svg style="position:absolute;left:1033.5px;top:1211.0px" width="24" height="24" viewBox="0 0 24 24"><rect x="0.9" y="0.9" width="21.4" height="7" rx="2.2" fill="none" stroke="#6a7080" stroke-width="1.5"/><path d="M3,4.4 L9.5,4.4 M15.6,0.9 L15.6,7.9" stroke="#6a7080" stroke-width="1.4"/><path d="M17.8,5 L18.9,3.6 L20,5" fill="none" stroke="#6a7080" stroke-width="1"/><rect x="1" y="10.8" width="13" height="3.6" rx="1" fill="none" stroke="#6a7080" stroke-width="1.4"/><rect x="1" y="17.4" width="9.5" height="3.6" rx="1" fill="none" stroke="#6a7080" stroke-width="1.4"/></svg><div style="position:absolute;left:1486px;top:1209.6px;width:26px;height:25.5px;border-radius:5px;background:#f7f8f9"></div><div style="position:absolute;left:1528px;top:1209.6px;width:26px;height:25.5px;border-radius:5px;background:#f7f8f9"></div><svg style="position:absolute;left:1489px;top:1213.0px" width="20" height="20" viewBox="0 0 20 20"><g transform="rotate(-45 10.2 7.9)"><rect x="1.8" y="5.1" width="16.8" height="5.6" rx="2.8" fill="none" stroke="#747a88" stroke-width="1.35"/><path d="M14.6,5.1 L14.6,10.7" stroke="#747a88" stroke-width="1.35"/></g><path d="M2.6,17.3 L17.6,17.3" stroke="#747a88" stroke-width="1.7"/></svg><svg style="position:absolute;left:1531px;top:1213.0px" width="20" height="20" viewBox="0 0 20 20"><path d="M2.3,4.6 L17.4,4.6 M6.8,4.3 L6.8,2.6 Q6.8,1.2 8.2,1.2 L11.6,1.2 Q13,1.2 13,2.6 L13,4.3 M4.6,7 L5.2,15.5 Q5.4,18.2 8,18.2 L11.8,18.2 Q14.4,18.2 14.6,15.5 L15.2,7 M7.6,9.6 L12.2,9.6 M7.6,12.8 L12.2,12.8" fill="none" stroke="#d3d6db" stroke-width="1.4" stroke-linecap="round" stroke-linejoin="round"/></svg><div style="position:absolute;left:2221px;top:1229px;width:9px;height:2px;background:#3a4252"></div><div style="position:absolute;left:2233px;top:1229px;width:9px;height:2px;background:#3a4252"></div><div style="position:absolute;left:952.5px;top:1327.85px;width:1563.5px;height:1px;background:#e9ebee"></div><div style="position:absolute;left:970px;top:1285.2px;width:16px;height:16px;border:2px solid #7c8290;border-radius:4px;box-sizing:border-box"></div><div style="position:absolute;left:1021px;top:1269.2px;width:48px;height:48px;border-radius:50%;background:#f6f7f9"></div><svg style="position:absolute;left:1033px;top:1281.2px" width="24" height="24" viewBox="0 0 24 24"><path d="M3.4,6.3 L3.4,3.3 L20.6,3.3 L20.6,6.3 M12,3.3 L12,21 M8.3,21 L15.7,21" fill="none" stroke="#6a7080" stroke-width="1.7" stroke-linecap="square"/></svg><div style="position:absolute;left:1486px;top:1279.8px;width:26px;height:25.5px;border-radius:5px;background:#f7f8f9"></div><div style="position:absolute;left:1528px;top:1279.8px;width:26px;height:25.5px;border-radius:5px;background:#f7f8f9"></div><svg style="position:absolute;left:1489px;top:1283.2px" width="20" height="20" viewBox="0 0 20 20"><g transform="rotate(-45 10.2 7.9)"><rect x="1.8" y="5.1" width="16.8" height="5.6" rx="2.8" fill="none" stroke="#747a88" stroke-width="1.35"/><path d="M14.6,5.1 L14.6,10.7" stroke="#747a88" stroke-width="1.35"/></g><path d="M2.6,17.3 L17.6,17.3" stroke="#747a88" stroke-width="1.7"/></svg><svg style="position:absolute;left:1531px;top:1283.2px" width="20" height="20" viewBox="0 0 20 20"><path d="M2.3,4.6 L17.4,4.6 M6.8,4.3 L6.8,2.6 Q6.8,1.2 8.2,1.2 L11.6,1.2 Q13,1.2 13,2.6 L13,4.3 M4.6,7 L5.2,15.5 Q5.4,18.2 8,18.2 L11.8,18.2 Q14.4,18.2 14.6,15.5 L15.2,7 M7.6,9.6 L12.2,9.6 M7.6,12.8 L12.2,12.8" fill="none" stroke="#d3d6db" stroke-width="1.4" stroke-linecap="round" stroke-linejoin="round"/></svg><div style="position:absolute;left:952.5px;top:1398.10px;width:1563.5px;height:1px;background:#e9ebee"></div><div style="position:absolute;left:970px;top:1355.5px;width:16px;height:16px;border:2px solid #7c8290;border-radius:4px;box-sizing:border-box"></div><div style="position:absolute;left:1021px;top:1339.5px;width:48px;height:48px;border-radius:50%;background:#f6f7f9"></div><svg style="position:absolute;left:1033px;top:1351.5px" width="24" height="24" viewBox="0 0 24 24"><path d="M3.4,6.3 L3.4,3.3 L20.6,3.3 L20.6,6.3 M12,3.3 L12,21 M8.3,21 L15.7,21" fill="none" stroke="#6a7080" stroke-width="1.7" stroke-linecap="square"/></svg><div style="position:absolute;left:1486px;top:1350.1px;width:26px;height:25.5px;border-radius:5px;background:#f7f8f9"></div><div style="position:absolute;left:1528px;top:1350.1px;width:26px;height:25.5px;border-radius:5px;background:#f7f8f9"></div><svg style="position:absolute;left:1489px;top:1353.5px" width="20" height="20" viewBox="0 0 20 20"><g transform="rotate(-45 10.2 7.9)"><rect x="1.8" y="5.1" width="16.8" height="5.6" rx="2.8" fill="none" stroke="#747a88" stroke-width="1.35"/><path d="M14.6,5.1 L14.6,10.7" stroke="#747a88" stroke-width="1.35"/></g><path d="M2.6,17.3 L17.6,17.3" stroke="#747a88" stroke-width="1.7"/></svg><svg style="position:absolute;left:1531px;top:1353.5px" width="20" height="20" viewBox="0 0 20 20"><path d="M2.3,4.6 L17.4,4.6 M6.8,4.3 L6.8,2.6 Q6.8,1.2 8.2,1.2 L11.6,1.2 Q13,1.2 13,2.6 L13,4.3 M4.6,7 L5.2,15.5 Q5.4,18.2 8,18.2 L11.8,18.2 Q14.4,18.2 14.6,15.5 L15.2,7 M7.6,9.6 L12.2,9.6 M7.6,12.8 L12.2,12.8" fill="none" stroke="#d3d6db" stroke-width="1.4" stroke-linecap="round" stroke-linejoin="round"/></svg><svg style="position:absolute;left:1908.2px;top:1354.5px" width="18" height="18" viewBox="0 0 18 18"><path d="M9,0.8 L11.1,2.4 L13.7,2.1 L14.6,4.6 L17,5.8 L16.4,8.4 L17.4,10.8 L15.4,12.5 L15.1,15.1 L12.5,15.4 L10.8,17.4 L8.4,16.4 L6,17.2 L4.6,14.9 L2.1,14.1 L2.3,11.5 L0.8,9.3 L2.4,7.2 L2.3,4.6 L4.8,3.8 L6.4,1.7 Z" fill="#3b6ee8"/><path d="M5.5,9.3 L7.9,11.6 L12.5,6.8" fill="none" stroke="#fff" stroke-width="1.6" stroke-linecap="round" stroke-linejoin="round"/></svg><div style="position:absolute;left:970px;top:1425.7px;width:16px;height:16px;border:2px solid #7c8290;border-radius:4px;box-sizing:border-box"></div><div style="position:absolute;left:1021px;top:1409.7px;width:48px;height:48px;border-radius:50%;background:#f6f7f9"></div><svg style="position:absolute;left:1033px;top:1421.7px" width="24" height="24" viewBox="0 0 24 24"><path d="M3.4,6.3 L3.4,3.3 L20.6,3.3 L20.6,6.3 M12,3.3 L12,21 M8.3,21 L15.7,21" fill="none" stroke="#6a7080" stroke-width="1.7" stroke-linecap="square"/></svg><div style="position:absolute;left:1486px;top:1420.3px;width:26px;height:25.5px;border-radius:5px;background:#f7f8f9"></div><div style="position:absolute;left:1528px;top:1420.3px;width:26px;height:25.5px;border-radius:5px;background:#f7f8f9"></div><svg style="position:absolute;left:1489px;top:1423.7px" width="20" height="20" viewBox="0 0 20 20"><g transform="rotate(-45 10.2 7.9)"><rect x="1.8" y="5.1" width="16.8" height="5.6" rx="2.8" fill="none" stroke="#747a88" stroke-width="1.35"/><path d="M14.6,5.1 L14.6,10.7" stroke="#747a88" stroke-width="1.35"/></g><path d="M2.6,17.3 L17.6,17.3" stroke="#747a88" stroke-width="1.7"/></svg><svg style="position:absolute;left:1531px;top:1423.7px" width="20" height="20" viewBox="0 0 20 20"><path d="M2.3,4.6 L17.4,4.6 M6.8,4.3 L6.8,2.6 Q6.8,1.2 8.2,1.2 L11.6,1.2 Q13,1.2 13,2.6 L13,4.3 M4.6,7 L5.2,15.5 Q5.4,18.2 8,18.2 L11.8,18.2 Q14.4,18.2 14.6,15.5 L15.2,7 M7.6,9.6 L12.2,9.6 M7.6,12.8 L12.2,12.8" fill="none" stroke="#d3d6db" stroke-width="1.4" stroke-linecap="round" stroke-linejoin="round"/></svg><div style="position:absolute;left:930px;top:1423px;width:1630px;height:21px;background:#f2f3f5"></div><svg style="position:absolute;left:26px;top:202.5px" width="22" height="22" viewBox="0 0 22 22"><path d="M1,9.5 Q1,8 2.2,7 L9.5,1.2 Q11,0 12.5,1.2 L19.8,7 Q21,8 21,9.5 L21,18 Q21,21.5 17.5,21.5 L4.5,21.5 Q1,21.5 1,18 Z" fill="#4b505c"/><rect x="10.2" y="14.5" width="1.6" height="3.5" fill="#9a9ea8"/></svg><svg style="position:absolute;left:26px;top:249px" width="22" height="24" viewBox="0 0 22 24"><circle cx="13.5" cy="8.5" r="7.5" fill="#4b505c"/><circle cx="13.8" cy="8" r="2.2" fill="#9a9ea8"/><path d="M8.5,13 L2.5,19.5 L5,22 L7,20 L8.5,21.5 L10.5,19.5 L9,18 L11,16" fill="#4b505c" stroke="#4b505c" stroke-width="2" stroke-linejoin="round"/></svg><svg style="position:absolute;left:25.5px;top:345.5px" width="24" height="22" viewBox="0 0 24 22"><path d="M12,6 L12,10.2 M4.5,14.5 L4.5,10.2 L19.5,10.2 L19.5,14.5 M12,10.2 L12,14.5" fill="none" stroke="#5d626d" stroke-width="1.5"/><rect x="7.5" y="0.3" width="9.5" height="6.2" rx="1.8" fill="#9a9ea8"/><rect x="0.8" y="15" width="7" height="6" rx="1.8" fill="#8d919b"/><rect x="8.8" y="15" width="6.8" height="6" rx="1.8" fill="#8d919b"/><rect x="16.6" y="15" width="7" height="6" rx="1.8" fill="#8d919b"/></svg><svg style="position:absolute;left:26px;top:395px" width="23" height="22" viewBox="0 0 23 22"><circle cx="6.2" cy="3.2" r="2.6" fill="#4b505c"/><circle cx="16.6" cy="3.2" r="2.6" fill="#4b505c"/><ellipse cx="4" cy="10.6" rx="3.6" ry="2.3" fill="#4b505c"/><ellipse cx="19" cy="10.6" rx="3.6" ry="2.3" fill="#4b505c"/><circle cx="11.5" cy="10.4" r="3.4" fill="#a3a7b0"/><ellipse cx="11.5" cy="17.8" rx="4.9" ry="2.9" fill="#a3a7b0"/></svg><svg style="position:absolute;left:26px;top:443px" width="23" height="22" viewBox="0 0 23 22"><circle cx="9" cy="5" r="4.5" fill="#4b505c"/><path d="M0.5,18 Q0.5,11 9,11 Q13,11 15,13 L15,21.5 L3,21.5 Q0.5,21.5 0.5,18 Z" fill="#4b505c"/><path d="M16.5,12.5 L22,14.5 L22,17 Q22,20.5 16.5,22 Q11,20.5 11,17 L11,14.5 Z" fill="#9a9ea8" stroke="#040a16" stroke-width="1.2"/></svg><svg style="position:absolute;left:26px;top:490.5px" width="22" height="22" viewBox="0 0 22 22"><path d="M11,0.5 L20.5,5.8 L20.5,16.2 L11,21.5 L1.5,16.2 L1.5,5.8 Z" fill="#4b505c" stroke="#4b505c" stroke-width="1" stroke-linejoin="round"/><circle cx="11" cy="8.6" r="2.6" fill="#a4a8b1"/><path d="M6.5,15.5 Q6.5,12.5 11,12.5 Q15.5,12.5 15.5,15.5 Z" fill="#a4a8b1"/></svg><svg style="position:absolute;left:26px;top:587px" width="22" height="22" viewBox="0 0 22 22"><rect x="0.5" y="0" width="21" height="5" rx="1" fill="#ffffff"/><path d="M2,6.5 L20,6.5 L20,18 Q20,21 17,21 L5,21 Q2,21 2,18 Z" fill="#6a6f7a"/><rect x="8.5" y="9.5" width="5" height="1.6" fill="#e8e9ec"/></svg><svg style="position:absolute;left:25px;top:1012px" width="25" height="24" viewBox="0 0 25 24"><path d="M14.3,1.6 Q15.8,1.2 15.8,3 L15.8,10 L6.5,13.4 Q4.6,14 5.4,12.2 Q8.5,6 14.3,1.6 Z" fill="#9ea3ad"/><path d="M19.4,11.4 Q20.2,12 19.6,13 L11.5,21.6 Q10.3,22.6 10.2,21 L9.3,15 Z" fill="#414652"/><path d="M18.8,7.6 Q21.6,8.6 22.6,11.6" fill="none" stroke="#8e939c" stroke-width="1.5" stroke-linecap="round"/><path d="M1.6,12.4 Q2.6,15.8 6,16.8" fill="none" stroke="#3a3f4a" stroke-width="1.5" stroke-linecap="round"/></svg><svg style="position:absolute;left:26px;top:1152px" width="23" height="23" viewBox="0 0 23 23"><rect x="0.5" y="12" width="10" height="10" rx="2.2" fill="#3f4450"/><rect x="6" y="6.5" width="10" height="10" rx="2.2" fill="#5e636e"/><rect x="11.5" y="0.5" width="10.5" height="10.5" rx="2.2" fill="#a9adb6"/></svg><svg style="position:absolute;left:26px;top:1200px" width="23" height="23" viewBox="0 0 23 23"><circle cx="11" cy="12" r="10.8" fill="#4b505c"/><path d="M5,14 Q7.5,10 9.5,12 Q11.5,14 14.5,10" fill="none" stroke="#a4a8b1" stroke-width="1.6" stroke-linecap="round"/><circle cx="20" cy="2.8" r="2.6" fill="#a4a8b1" stroke="#040a16" stroke-width="1"/></svg><svg style="position:absolute;left:25.5px;top:1248px" width="24" height="23" viewBox="0 0 24 23"><path d="M11,0.5 L0.8,20.5 Q0.5,22 2,22 L11,22 Z" fill="#8e929c"/><path d="M12,0.5 L23.2,20.5 Q23.5,22 22,22 L12,22 Z" fill="#5a5f6a"/><path d="M0.8,20.5 Q0.5,22.5 2,22.5 L22,22.5 Q23.5,22.5 23.2,20.5 L12,17 Z" fill="#6e737e"/></svg><svg style="position:absolute;left:26px;top:1296px" width="23" height="23" viewBox="0 0 23 23"><rect x="0.5" y="0.5" width="22" height="22" rx="3" fill="#4b505c"/><path d="M3.5,20 L19.5,3" stroke="#a4a8b1" stroke-width="1.5"/><path d="M4,5.5 L9,5.5 M13.5,16.5 L19,16.5 M16.2,13.8 L16.2,19.2" stroke="#a4a8b1" stroke-width="1.5"/></svg><svg style="position:absolute;left:26px;top:1396.5px" width="22" height="22" viewBox="0 0 22 22"><path d="M9.3,1 L12.7,1 L13.3,3.8 Q14.6,4.3 15.7,5.1 L18.4,4.1 L20.1,7.1 L17.9,9 Q18.1,11 17.9,13 L20.1,14.9 L18.4,17.9 L15.7,16.9 Q14.6,17.7 13.3,18.2 L12.7,21 L9.3,21 L8.7,18.2 Q7.4,17.7 6.3,16.9 L3.6,17.9 L1.9,14.9 L4.1,13 Q3.9,11 4.1,9 L1.9,7.1 L3.6,4.1 L6.3,5.1 Q7.4,4.3 8.7,3.8 Z" fill="#7d818b"/><circle cx="11" cy="11" r="3.3" fill="#ffffff"/></svg><span id="t0" style="position:absolute;top:102.60px;font-size:17.09px;line-height:22px;font-weight:400;color:#9a9ea8;white-space:nowrap;letter-spacing:0.250px;-webkit-text-stroke:0.2px #9a9ea8;left:72.00px">Tìm kiếm</span><span id="t1" style="position:absolute;top:156.60px;font-size:14.10px;line-height:18px;font-weight:400;color:#5a8ef2;white-space:nowrap;letter-spacing:0.250px;-webkit-text-stroke:0.45px #5a8ef2;left:24.00px">CÀI ĐẶT CHUNG</span><span id="t2" style="position:absolute;top:305.80px;font-size:13.75px;line-height:18px;font-weight:400;color:#5a8ef2;white-space:nowrap;letter-spacing:0.250px;-webkit-text-stroke:0.45px #5a8ef2;left:24.00px">QUẢN LÝ CƠ CẤU TỔ CHỨC</span><span id="t3" style="position:absolute;top:546.10px;font-size:13.72px;line-height:18px;font-weight:400;color:#5a8ef2;white-space:nowrap;letter-spacing:-0.285px;-webkit-text-stroke:0.45px #5a8ef2;left:24.00px">QUẢN LÝ DỮ LIỆU</span><span id="t4" style="position:absolute;top:1351.80px;font-size:13.72px;line-height:18px;font-weight:400;color:#5a8ef2;white-space:nowrap;letter-spacing:-0.077px;-webkit-text-stroke:0.45px #5a8ef2;left:24.00px">TÍCH HỢP DỮ LIỆU</span><span id="t5" style="position:absolute;top:204.30px;font-size:16.64px;line-height:22px;font-weight:400;color:#a4a8b1;white-space:nowrap;letter-spacing:0.935px;-webkit-text-stroke:0.45px #a4a8b1;left:67.00px">Thông tin doanh nghiệp</span><span id="t6" style="position:absolute;top:252.30px;font-size:16.64px;line-height:22px;font-weight:400;color:#a4a8b1;white-space:nowrap;letter-spacing:0.698px;-webkit-text-stroke:0.45px #a4a8b1;left:67.00px">Single Sign-On</span><span id="t7" style="position:absolute;top:348.30px;font-size:16.64px;line-height:22px;font-weight:400;color:#a4a8b1;white-space:nowrap;letter-spacing:0.573px;-webkit-text-stroke:0.45px #a4a8b1;left:67.00px">Cơ cấu tổ chức</span><span id="t8" style="position:absolute;top:396.30px;font-size:16.64px;line-height:22px;font-weight:400;color:#a4a8b1;white-space:nowrap;letter-spacing:1.434px;-webkit-text-stroke:0.45px #a4a8b1;left:67.00px">Team</span><span id="t9" style="position:absolute;top:444.30px;font-size:16.64px;line-height:22px;font-weight:400;color:#a4a8b1;white-space:nowrap;letter-spacing:0.489px;-webkit-text-stroke:0.45px #a4a8b1;left:67.00px">Tài khoản</span><span id="t10" style="position:absolute;top:492.30px;font-size:16.56px;line-height:22px;font-weight:400;color:#a4a8b1;white-space:nowrap;letter-spacing:0.250px;-webkit-text-stroke:0.45px #a4a8b1;left:67.00px">Phân quyền RBAC</span><span id="t11" style="position:absolute;top:588.00px;font-size:15.88px;line-height:21px;font-weight:700;color:#ffffff;white-space:nowrap;letter-spacing:0.000px;left:67.00px">Đối tượng</span><span id="t12" style="position:absolute;top:631.30px;font-size:15.81px;line-height:21px;font-weight:700;color:#ffffff;white-space:nowrap;letter-spacing:0.000px;left:67.00px">Profiles</span><span id="t13" style="position:absolute;top:678.80px;font-size:16.64px;line-height:22px;font-weight:400;color:#a4a8b1;white-space:nowrap;letter-spacing:0.941px;-webkit-text-stroke:0.45px #a4a8b1;left:67.00px">Công ty</span><span id="t14" style="position:absolute;top:726.80px;font-size:16.64px;line-height:22px;font-weight:400;color:#a4a8b1;white-space:nowrap;letter-spacing:1.163px;-webkit-text-stroke:0.45px #a4a8b1;left:67.00px">Sản phẩm</span><span id="t15" style="position:absolute;top:774.80px;font-size:16.64px;line-height:22px;font-weight:400;color:#a4a8b1;white-space:nowrap;letter-spacing:0.651px;-webkit-text-stroke:0.45px #a4a8b1;left:67.00px">Cơ hội bán</span><span id="t16" style="position:absolute;top:822.80px;font-size:16.64px;line-height:22px;font-weight:400;color:#a4a8b1;white-space:nowrap;letter-spacing:0.846px;-webkit-text-stroke:0.45px #a4a8b1;left:67.00px">Ticket</span><span id="t17" style="position:absolute;top:870.80px;font-size:16.64px;line-height:22px;font-weight:400;color:#a4a8b1;white-space:nowrap;letter-spacing:0.999px;-webkit-text-stroke:0.45px #a4a8b1;left:67.00px">Công việc</span><span id="t18" style="position:absolute;top:918.80px;font-size:16.64px;line-height:22px;font-weight:400;color:#a4a8b1;white-space:nowrap;letter-spacing:1.047px;-webkit-text-stroke:0.45px #a4a8b1;left:67.00px">Địa điểm</span><span id="t19" style="position:absolute;top:966.90px;font-size:16.64px;line-height:22px;font-weight:400;color:#a4a8b1;white-space:nowrap;letter-spacing:0.613px;-webkit-text-stroke:0.45px #a4a8b1;left:67.00px">Tags</span><span id="t20" style="position:absolute;top:1015.10px;font-size:16.60px;line-height:22px;font-weight:400;color:#a4a8b1;white-space:nowrap;letter-spacing:0.250px;-webkit-text-stroke:0.45px #a4a8b1;left:67.00px">Events</span><span id="t21" style="position:absolute;top:1057.70px;font-size:16.64px;line-height:22px;font-weight:400;color:#a4a8b1;white-space:nowrap;letter-spacing:0.618px;-webkit-text-stroke:0.45px #a4a8b1;left:67.00px">Event tùy biến</span><span id="t22" style="position:absolute;top:1105.60px;font-size:16.64px;line-height:22px;font-weight:400;color:#a4a8b1;white-space:nowrap;letter-spacing:0.773px;-webkit-text-stroke:0.45px #a4a8b1;left:67.00px">Event tracking</span><span id="t23" style="position:absolute;top:1153.80px;font-size:16.64px;line-height:22px;font-weight:400;color:#a4a8b1;white-space:nowrap;letter-spacing:0.858px;-webkit-text-stroke:0.45px #a4a8b1;left:67.00px">Data Quality</span><span id="t24" style="position:absolute;top:1201.90px;font-size:16.64px;line-height:22px;font-weight:400;color:#a4a8b1;white-space:nowrap;letter-spacing:0.730px;-webkit-text-stroke:0.45px #a4a8b1;left:67.00px">Data Retention</span><span id="t25" style="position:absolute;top:1250.10px;font-size:16.64px;line-height:22px;font-weight:400;color:#a4a8b1;white-space:nowrap;letter-spacing:0.891px;-webkit-text-stroke:0.45px #a4a8b1;left:67.00px">Data Modeling</span><span id="t26" style="position:absolute;top:1298.00px;font-size:16.64px;line-height:22px;font-weight:400;color:#a4a8b1;white-space:nowrap;letter-spacing:1.037px;-webkit-text-stroke:0.45px #a4a8b1;left:67.00px">Calculated Attribute</span><span id="t27" style="position:absolute;top:1398.00px;font-size:16.32px;line-height:21px;font-weight:700;color:#ffffff;white-space:nowrap;letter-spacing:0.682px;left:62.00px">Cài đặt</span><span id="t28" style="position:absolute;top:15.30px;font-size:21.53px;line-height:28px;font-weight:700;color:#0e1729;white-space:nowrap;letter-spacing:0.000px;left:368.00px">Đối tượng Profiles</span><span id="t29" style="position:absolute;top:18.80px;font-size:15.00px;line-height:20px;font-weight:400;color:#3b6ee8;white-space:nowrap;letter-spacing:0.725px;-webkit-text-stroke:0.45px #3b6ee8;left:607.50px">Trường thông tin tùy biến</span><span id="t30" style="position:absolute;top:18.80px;font-size:15.00px;line-height:20px;font-weight:400;color:#6b7385;white-space:nowrap;letter-spacing:0.583px;-webkit-text-stroke:0.45px #6b7385;left:842.30px">Sử dụng đối tượng</span><span id="t31" style="position:absolute;top:18.80px;font-size:15.00px;line-height:20px;font-weight:400;color:#6b7385;white-space:nowrap;letter-spacing:1.010px;-webkit-text-stroke:0.45px #6b7385;left:1027.00px">Đồng ý nhận quảng cáo</span><span id="t32" style="position:absolute;top:15.60px;font-size:17.50px;line-height:23px;font-weight:700;color:#ffffff;white-space:nowrap;letter-spacing:0.000px;-webkit-text-stroke:0.6px #ffffff;left:2511.60px">Y</span><span id="t33" style="position:absolute;top:80.70px;font-size:17.28px;line-height:22px;font-weight:400;color:#9a9fab;white-space:nowrap;letter-spacing:0.265px;-webkit-text-stroke:0.2px #9a9fab;left:417.00px">Tìm theo tên trường thông tin</span><span id="t34" style="position:absolute;top:82.30px;font-size:16.64px;line-height:22px;font-weight:400;color:#ffffff;white-space:nowrap;letter-spacing:0.662px;-webkit-text-stroke:0.45px #ffffff;left:2136.30px">Tạo nhóm mới</span><span id="t35" style="position:absolute;top:82.30px;font-size:16.64px;line-height:22px;font-weight:400;color:#ffffff;white-space:nowrap;letter-spacing:0.540px;-webkit-text-stroke:0.45px #ffffff;left:2318.00px">Tạo trường thông tin mới</span><span id="t36" style="position:absolute;top:143.20px;font-size:16.40px;line-height:21px;font-weight:400;color:#9097a4;white-space:nowrap;letter-spacing:0.250px;-webkit-text-stroke:0.2px #9097a4;left:373.10px">Số lượng:</span><span id="t37" style="position:absolute;top:143.20px;font-size:16.28px;line-height:21px;font-weight:700;color:#1a2233;white-space:nowrap;letter-spacing:0.000px;left:452.20px">155 Trường thông tin</span><span id="t38" style="position:absolute;top:223.70px;font-size:22.00px;line-height:29px;font-weight:400;color:#0e1729;white-space:nowrap;letter-spacing:1.181px;-webkit-text-stroke:0.45px #0e1729;left:379.00px">Nhóm trường thông tin</span><span id="t39" style="position:absolute;top:267.40px;font-size:17.28px;line-height:22px;font-weight:400;color:#6b7385;white-space:nowrap;letter-spacing:0.297px;-webkit-text-stroke:0.2px #6b7385;left:379.00px">Thứ tự hiển thị các nhóm trường thông tin.</span><span id="t40" style="position:absolute;top:267.40px;font-size:16.64px;line-height:22px;font-weight:400;color:#3b6ee8;white-space:nowrap;letter-spacing:0.779px;-webkit-text-stroke:0.45px #3b6ee8;left:722.70px">Cấu hình ngay</span><span id="t41" style="position:absolute;top:325.80px;font-size:16.64px;line-height:22px;font-weight:400;color:#3b6ee8;white-space:nowrap;letter-spacing:0.904px;-webkit-text-stroke:0.45px #3b6ee8;left:432.20px">Thông tin chung</span><span id="t42" style="position:absolute;top:326.80px;font-size:15.60px;line-height:20px;font-weight:400;color:#3b6ee8;white-space:nowrap;letter-spacing:1.262px;-webkit-text-stroke:0.45px #3b6ee8;left:590.70px;transform:translateX(-50%)">21</span><span id="t43" style="position:absolute;top:381.90px;font-size:16.64px;line-height:22px;font-weight:400;color:#6b7385;white-space:nowrap;letter-spacing:0.646px;-webkit-text-stroke:0.45px #6b7385;left:432.20px">RV - Thông tin lead (chỉ KH mới)</span><span id="t44" style="position:absolute;top:382.40px;font-size:15.94px;line-height:21px;font-weight:400;color:#6b7385;white-space:nowrap;letter-spacing:0.000px;-webkit-text-stroke:0.45px #6b7385;left:718.30px;transform:translateX(-50%)">6</span><span id="t45" style="position:absolute;top:437.90px;font-size:16.64px;line-height:22px;font-weight:400;color:#6b7385;white-space:nowrap;letter-spacing:0.769px;-webkit-text-stroke:0.45px #6b7385;left:432.20px">RV - Thông tin giao dịch</span><span id="t46" style="position:absolute;top:438.40px;font-size:15.94px;line-height:21px;font-weight:400;color:#6b7385;white-space:nowrap;letter-spacing:0.000px;-webkit-text-stroke:0.45px #6b7385;left:653.30px;transform:translateX(-50%)">4</span><span id="t47" style="position:absolute;top:493.90px;font-size:16.64px;line-height:22px;font-weight:400;color:#6b7385;white-space:nowrap;letter-spacing:0.584px;-webkit-text-stroke:0.45px #6b7385;left:432.20px">RV - Thông tin Loyalty</span><span id="t48" style="position:absolute;top:494.40px;font-size:15.94px;line-height:21px;font-weight:400;color:#6b7385;white-space:nowrap;letter-spacing:0.000px;-webkit-text-stroke:0.45px #6b7385;left:634.00px;transform:translateX(-50%)">2</span><span id="t49" style="position:absolute;top:550.00px;font-size:16.64px;line-height:22px;font-weight:400;color:#6b7385;white-space:nowrap;letter-spacing:0.862px;-webkit-text-stroke:0.45px #6b7385;left:432.20px">Nhân khẩu học</span><span id="t50" style="position:absolute;top:551.00px;font-size:15.60px;line-height:20px;font-weight:400;color:#6b7385;white-space:nowrap;letter-spacing:1.262px;-webkit-text-stroke:0.45px #6b7385;left:581.00px;transform:translateX(-50%)">41</span><span id="t51" style="position:absolute;top:606.20px;font-size:16.64px;line-height:22px;font-weight:400;color:#6b7385;white-space:nowrap;letter-spacing:0.678px;-webkit-text-stroke:0.45px #6b7385;left:432.20px">Hành vi tương tác</span><span id="t52" style="position:absolute;top:607.20px;font-size:15.60px;line-height:20px;font-weight:400;color:#6b7385;white-space:nowrap;letter-spacing:1.262px;-webkit-text-stroke:0.45px #6b7385;left:602.60px;transform:translateX(-50%)">13</span><span id="t53" style="position:absolute;top:661.80px;font-size:16.64px;line-height:22px;font-weight:400;color:#6b7385;white-space:nowrap;letter-spacing:0.648px;-webkit-text-stroke:0.45px #6b7385;left:432.20px">Thông tin Loyalty</span><span id="t54" style="position:absolute;top:662.80px;font-size:15.60px;line-height:20px;font-weight:400;color:#6b7385;white-space:nowrap;letter-spacing:1.262px;-webkit-text-stroke:0.45px #6b7385;left:595.80px;transform:translateX(-50%)">14</span><span id="t55" style="position:absolute;top:717.80px;font-size:16.64px;line-height:22px;font-weight:400;color:#6b7385;white-space:nowrap;letter-spacing:0.925px;-webkit-text-stroke:0.45px #6b7385;left:432.20px">Nhóm tùy biến</span><span id="t56" style="position:absolute;top:718.80px;font-size:15.60px;line-height:20px;font-weight:400;color:#6b7385;white-space:nowrap;letter-spacing:1.262px;-webkit-text-stroke:0.45px #6b7385;left:577.10px;transform:translateX(-50%)">13</span><span id="t57" style="position:absolute;top:774.10px;font-size:16.64px;line-height:22px;font-weight:400;color:#6b7385;white-space:nowrap;letter-spacing:1.274px;-webkit-text-stroke:0.45px #6b7385;left:432.20px">Vay</span><span id="t58" style="position:absolute;top:775.10px;font-size:15.60px;line-height:20px;font-weight:400;color:#6b7385;white-space:nowrap;letter-spacing:1.262px;-webkit-text-stroke:0.45px #6b7385;left:488.70px;transform:translateX(-50%)">10</span><span id="t59" style="position:absolute;top:829.70px;font-size:16.64px;line-height:22px;font-weight:400;color:#6b7385;white-space:nowrap;letter-spacing:0.957px;-webkit-text-stroke:0.45px #6b7385;left:432.20px">Khác</span><span id="t60" style="position:absolute;top:830.70px;font-size:15.60px;line-height:20px;font-weight:400;color:#6b7385;white-space:nowrap;letter-spacing:1.262px;-webkit-text-stroke:0.45px #6b7385;left:499.50px;transform:translateX(-50%)">31</span><span id="t61" style="position:absolute;top:236.60px;font-size:22.00px;line-height:29px;font-weight:400;color:#0e1729;white-space:nowrap;letter-spacing:1.300px;-webkit-text-stroke:0.45px #0e1729;left:999.00px">Thông tin chung</span><span id="t62" style="position:absolute;top:239.80px;font-size:18.62px;line-height:24px;font-weight:400;color:#0e1729;white-space:nowrap;letter-spacing:-0.706px;-webkit-text-stroke:0.45px #0e1729;left:1182.00px">(21)</span><span id="t63" style="position:absolute;top:240.80px;font-size:16.64px;line-height:22px;font-weight:400;color:#3b6ee8;white-space:nowrap;letter-spacing:0.580px;-webkit-text-stroke:0.45px #3b6ee8;left:2332.00px">Tạo trường thông tin</span><span id="t64" style="position:absolute;top:314.70px;font-size:15.08px;line-height:20px;font-weight:400;color:#6b7385;white-space:nowrap;letter-spacing:0.661px;-webkit-text-stroke:0.45px #6b7385;left:1021.00px">Trường thông tin</span><span id="t65" style="position:absolute;top:315.20px;font-size:14.91px;line-height:19px;font-weight:400;color:#6b7385;white-space:nowrap;letter-spacing:0.250px;-webkit-text-stroke:0.45px #6b7385;left:1593.60px">Dữ liệu</span><span id="t66" style="position:absolute;top:314.70px;font-size:15.08px;line-height:20px;font-weight:400;color:#6b7385;white-space:nowrap;letter-spacing:0.663px;-webkit-text-stroke:0.45px #6b7385;left:1906.50px">Key trường thông tin</span><span id="t67" style="position:absolute;top:314.70px;font-size:15.08px;line-height:20px;font-weight:400;color:#6b7385;white-space:nowrap;letter-spacing:0.375px;-webkit-text-stroke:0.45px #6b7385;left:2220.00px">Tên phụ</span><span id="t68" style="position:absolute;top:371.10px;font-size:16.64px;line-height:22px;font-weight:400;color:#3b6ee8;white-space:nowrap;letter-spacing:1.366px;-webkit-text-stroke:0.45px #3b6ee8;left:1080.00px">Company name</span><span id="t69" style="position:absolute;top:370.60px;font-size:16.17px;line-height:21px;font-weight:400;color:#1c2434;white-space:nowrap;letter-spacing:0.250px;-webkit-text-stroke:0.2px #1c2434;left:1594.00px">Chữ</span><span id="t70" style="position:absolute;top:369.90px;font-size:17.28px;line-height:22px;font-weight:400;color:#1c2434;white-space:nowrap;letter-spacing:0.252px;-webkit-text-stroke:0.2px #1c2434;left:1907.50px">_dyn_company_name_17667319...</span><span id="t71" style="position:absolute;top:441.03px;font-size:16.19px;line-height:21px;font-weight:400;color:#3b6ee8;white-space:nowrap;letter-spacing:0.250px;-webkit-text-stroke:0.45px #3b6ee8;left:1080.00px">Level</span><span id="t72" style="position:absolute;top:440.03px;font-size:16.17px;line-height:21px;font-weight:400;color:#1c2434;white-space:nowrap;letter-spacing:0.250px;-webkit-text-stroke:0.2px #1c2434;left:1594.00px">Chữ</span><span id="t73" style="position:absolute;top:439.33px;font-size:17.01px;line-height:22px;font-weight:400;color:#1c2434;white-space:nowrap;letter-spacing:0.250px;-webkit-text-stroke:0.2px #1c2434;left:1907.50px">_dyn_level_1766718404098</span><span id="t74" style="position:absolute;top:510.78px;font-size:16.64px;line-height:22px;font-weight:400;color:#3b6ee8;white-space:nowrap;letter-spacing:1.057px;-webkit-text-stroke:0.45px #3b6ee8;left:1080.00px">Mã coupon</span><span id="t75" style="position:absolute;top:510.28px;font-size:16.17px;line-height:21px;font-weight:400;color:#1c2434;white-space:nowrap;letter-spacing:0.250px;-webkit-text-stroke:0.2px #1c2434;left:1594.00px">Chữ</span><span id="t76" style="position:absolute;top:509.57px;font-size:17.20px;line-height:22px;font-weight:400;color:#1c2434;white-space:nowrap;letter-spacing:0.250px;-webkit-text-stroke:0.2px #1c2434;left:1907.50px">_dyn_ma_coupon_1766718513567</span><span id="t77" style="position:absolute;top:581.02px;font-size:16.64px;line-height:22px;font-weight:400;color:#3b6ee8;white-space:nowrap;letter-spacing:0.895px;-webkit-text-stroke:0.45px #3b6ee8;left:1080.00px">Mã voucher</span><span id="t78" style="position:absolute;top:580.52px;font-size:16.17px;line-height:21px;font-weight:400;color:#1c2434;white-space:nowrap;letter-spacing:0.250px;-webkit-text-stroke:0.2px #1c2434;left:1594.00px">Chữ</span><span id="t79" style="position:absolute;top:579.82px;font-size:17.17px;line-height:22px;font-weight:400;color:#1c2434;white-space:nowrap;letter-spacing:0.250px;-webkit-text-stroke:0.2px #1c2434;left:1907.50px">_dyn_ma_voucher_17667184990...</span><span id="t80" style="position:absolute;top:651.27px;font-size:16.64px;line-height:22px;font-weight:400;color:#3b6ee8;white-space:nowrap;letter-spacing:0.865px;-webkit-text-stroke:0.45px #3b6ee8;left:1080.00px">Phân loại khách hàng</span><span id="t81" style="position:absolute;top:650.27px;font-size:17.28px;line-height:22px;font-weight:400;color:#1c2434;white-space:nowrap;letter-spacing:0.361px;-webkit-text-stroke:0.2px #1c2434;left:1594.00px">Lựa chọn theo danh sách</span><span id="t82" style="position:absolute;top:650.07px;font-size:17.28px;line-height:22px;font-weight:400;color:#1c2434;white-space:nowrap;letter-spacing:0.253px;-webkit-text-stroke:0.2px #1c2434;left:1907.50px">_dyn_partner_1573722266623</span><span id="t83" style="position:absolute;top:721.52px;font-size:16.64px;line-height:22px;font-weight:400;color:#3b6ee8;white-space:nowrap;letter-spacing:0.938px;-webkit-text-stroke:0.45px #3b6ee8;left:1080.00px">Voucher</span><span id="t84" style="position:absolute;top:721.02px;font-size:16.17px;line-height:21px;font-weight:400;color:#1c2434;white-space:nowrap;letter-spacing:0.250px;-webkit-text-stroke:0.2px #1c2434;left:1594.00px">Chữ</span><span id="t85" style="position:absolute;top:720.32px;font-size:17.17px;line-height:22px;font-weight:400;color:#1c2434;white-space:nowrap;letter-spacing:0.250px;-webkit-text-stroke:0.2px #1c2434;left:1907.50px">_dyn_voucher_1766731448859</span><span id="t86" style="position:absolute;top:791.77px;font-size:16.64px;line-height:22px;font-weight:400;color:#3b6ee8;white-space:nowrap;letter-spacing:0.578px;-webkit-text-stroke:0.45px #3b6ee8;left:1080.00px">Độ tuổi</span><span id="t87" style="position:absolute;top:790.77px;font-size:17.01px;line-height:22px;font-weight:400;color:#1c2434;white-space:nowrap;letter-spacing:0.250px;-webkit-text-stroke:0.2px #1c2434;left:1594.00px">Số nguyên dương</span><span id="t88" style="position:absolute;top:790.57px;font-size:17.28px;line-height:22px;font-weight:400;color:#1c2434;white-space:nowrap;letter-spacing:1.229px;-webkit-text-stroke:0.2px #1c2434;left:1907.50px">age</span><span id="t89" style="position:absolute;top:862.02px;font-size:16.64px;line-height:22px;font-weight:400;color:#3b6ee8;white-space:nowrap;letter-spacing:0.862px;-webkit-text-stroke:0.45px #3b6ee8;left:1080.00px">Ngày, tháng, năm sinh</span><span id="t90" style="position:absolute;top:861.02px;font-size:17.28px;line-height:22px;font-weight:400;color:#1c2434;white-space:nowrap;letter-spacing:1.535px;-webkit-text-stroke:0.2px #1c2434;left:1594.00px">dd/mm/yyyy</span><span id="t91" style="position:absolute;top:860.82px;font-size:17.28px;line-height:22px;font-weight:400;color:#1c2434;white-space:nowrap;letter-spacing:0.874px;-webkit-text-stroke:0.2px #1c2434;left:1907.50px">birthday</span><span id="t92" style="position:absolute;top:932.27px;font-size:16.64px;line-height:22px;font-weight:400;color:#3b6ee8;white-space:nowrap;letter-spacing:0.840px;-webkit-text-stroke:0.45px #3b6ee8;left:1080.00px">Thời gian bắt đầu ghi nhận thông tin</span><span id="t93" style="position:absolute;top:931.27px;font-size:17.28px;line-height:22px;font-weight:400;color:#1c2434;white-space:nowrap;letter-spacing:1.148px;-webkit-text-stroke:0.2px #1c2434;left:1594.00px">dd/mm/yyyy hh:mm</span><span id="t94" style="position:absolute;top:931.07px;font-size:17.28px;line-height:22px;font-weight:400;color:#1c2434;white-space:nowrap;letter-spacing:1.036px;-webkit-text-stroke:0.2px #1c2434;left:1907.50px">created_time</span><span id="t95" style="position:absolute;top:1002.52px;font-size:16.64px;line-height:22px;font-weight:400;color:#3b6ee8;white-space:nowrap;letter-spacing:0.611px;-webkit-text-stroke:0.45px #3b6ee8;left:1080.00px">Profile ID trên hệ thống ngoài</span><span id="t96" style="position:absolute;top:1002.02px;font-size:16.17px;line-height:21px;font-weight:400;color:#1c2434;white-space:nowrap;letter-spacing:0.250px;-webkit-text-stroke:0.2px #1c2434;left:1594.00px">Chữ</span><span id="t97" style="position:absolute;top:1001.32px;font-size:17.28px;line-height:22px;font-weight:400;color:#1c2434;white-space:nowrap;letter-spacing:0.957px;-webkit-text-stroke:0.2px #1c2434;left:1938.80px">customer_id</span><span id="t98" style="position:absolute;top:1072.77px;font-size:16.64px;line-height:22px;font-weight:400;color:#3b6ee8;white-space:nowrap;letter-spacing:0.308px;-webkit-text-stroke:0.45px #3b6ee8;left:1080.00px">Giới tính</span><span id="t99" style="position:absolute;top:1071.77px;font-size:17.28px;line-height:22px;font-weight:400;color:#1c2434;white-space:nowrap;letter-spacing:0.361px;-webkit-text-stroke:0.2px #1c2434;left:1594.00px">Lựa chọn theo danh sách</span><span id="t100" style="position:absolute;top:1071.57px;font-size:17.28px;line-height:22px;font-weight:400;color:#1c2434;white-space:nowrap;letter-spacing:0.718px;-webkit-text-stroke:0.2px #1c2434;left:1907.50px">gender</span><span id="t101" style="position:absolute;top:1143.02px;font-size:16.62px;line-height:22px;font-weight:400;color:#3b6ee8;white-space:nowrap;letter-spacing:0.250px;-webkit-text-stroke:0.45px #3b6ee8;left:1080.00px">Sở thích</span><span id="t102" style="position:absolute;top:1142.02px;font-size:16.82px;line-height:22px;font-weight:400;color:#1c2434;white-space:nowrap;letter-spacing:0.250px;-webkit-text-stroke:0.2px #1c2434;left:1594.00px">Tags</span><span id="t103" style="position:absolute;top:1141.82px;font-size:17.28px;line-height:22px;font-weight:400;color:#1c2434;white-space:nowrap;letter-spacing:0.877px;-webkit-text-stroke:0.2px #1c2434;left:1907.50px">hobby</span><span id="t104" style="position:absolute;top:1213.27px;font-size:16.64px;line-height:22px;font-weight:400;color:#3b6ee8;white-space:nowrap;letter-spacing:0.892px;-webkit-text-stroke:0.45px #3b6ee8;left:1080.00px">Nghề nghiệp</span><span id="t105" style="position:absolute;top:1212.27px;font-size:17.28px;line-height:22px;font-weight:400;color:#1c2434;white-space:nowrap;letter-spacing:0.361px;-webkit-text-stroke:0.2px #1c2434;left:1594.00px">Lựa chọn theo danh sách</span><span id="t106" style="position:absolute;top:1212.07px;font-size:17.28px;line-height:22px;font-weight:400;color:#1c2434;white-space:nowrap;letter-spacing:0.669px;-webkit-text-stroke:0.2px #1c2434;left:1907.50px">job</span><span id="t107" style="position:absolute;top:1283.52px;font-size:16.64px;line-height:22px;font-weight:400;color:#3b6ee8;white-space:nowrap;letter-spacing:0.572px;-webkit-text-stroke:0.45px #3b6ee8;left:1080.00px">Họ và tên</span><span id="t108" style="position:absolute;top:1283.02px;font-size:16.17px;line-height:21px;font-weight:400;color:#1c2434;white-space:nowrap;letter-spacing:0.250px;-webkit-text-stroke:0.2px #1c2434;left:1594.00px">Chữ</span><span id="t109" style="position:absolute;top:1282.32px;font-size:17.28px;line-height:22px;font-weight:400;color:#1c2434;white-space:nowrap;letter-spacing:1.256px;-webkit-text-stroke:0.2px #1c2434;left:1907.50px">name</span><span id="t110" style="position:absolute;top:1282.52px;font-size:16.96px;line-height:22px;font-weight:400;color:#1c2434;white-space:nowrap;letter-spacing:0.250px;-webkit-text-stroke:0.2px #1c2434;left:2220.00px">Họ và tên Profile</span><span id="t111" style="position:absolute;top:1353.77px;font-size:16.64px;line-height:22px;font-weight:400;color:#3b6ee8;white-space:nowrap;letter-spacing:1.170px;-webkit-text-stroke:0.45px #3b6ee8;left:1080.00px">E-mail</span><span id="t112" style="position:absolute;top:1353.27px;font-size:16.17px;line-height:21px;font-weight:400;color:#1c2434;white-space:nowrap;letter-spacing:0.250px;-webkit-text-stroke:0.2px #1c2434;left:1594.00px">Chữ</span><span id="t113" style="position:absolute;top:1352.57px;font-size:17.28px;line-height:22px;font-weight:400;color:#1c2434;white-space:nowrap;letter-spacing:1.008px;-webkit-text-stroke:0.2px #1c2434;left:1938.80px">primary_email</span><span id="t114" style="position:absolute;top:1352.77px;font-size:17.28px;line-height:22px;font-weight:400;color:#1c2434;white-space:nowrap;letter-spacing:0.259px;-webkit-text-stroke:0.2px #1c2434;left:2220.00px">Email profile</span></body></html>
